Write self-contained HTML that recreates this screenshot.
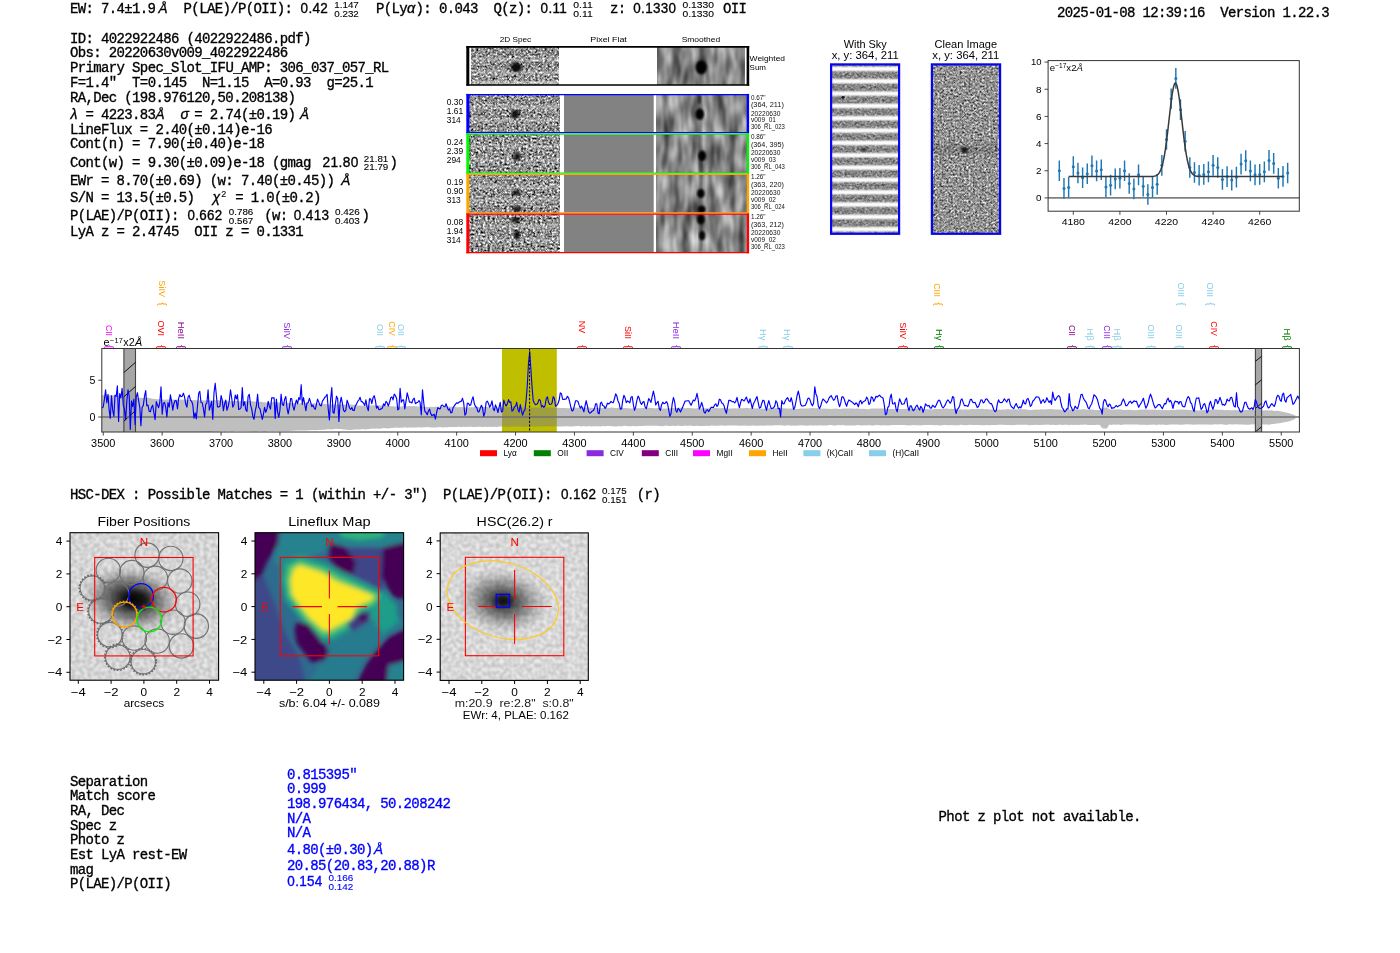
<!DOCTYPE html>
<html><head><meta charset="utf-8"><title>ELiXer report</title>
<style>
html,body{margin:0;padding:0;background:#fff;}
body{width:1400px;height:953px;overflow:hidden;position:relative;}
svg{position:absolute;left:0;top:0;opacity:0.999;}
.m{font-family:"Liberation Mono",monospace;font-size:14px;letter-spacing:-0.58px;fill:#000;white-space:pre;stroke:#000;stroke-width:0.34px;}
.m.b{stroke:#0000ff;}
.mi{font-family:"Liberation Sans",sans-serif;font-style:italic;font-size:13.5px;letter-spacing:0;}
.ms{font-family:"Liberation Sans",sans-serif;font-size:14.4px;letter-spacing:0.35px;}
.fr{font-family:"Liberation Sans",sans-serif;font-size:9.2px;letter-spacing:0;stroke-width:0.12px;}
.s{font-family:"Liberation Sans",sans-serif;}
.b{fill:#0000ff;}
</style></head><body>
<svg width="1400" height="953" viewBox="0 0 1400 953">
<text class="m" x="69.90" y="13.40" textLength="85.53" lengthAdjust="spacing">EW: 7.4±1.9</text>
<text class="m mi" x="158.60" y="13.40">Å</text>
<text class="m" x="183.60" y="13.40" textLength="108.85" lengthAdjust="spacing">P(LAE)/P(OII):</text>
<text class="m ms" x="300.60" y="13.40" textLength="27.60" lengthAdjust="spacingAndGlyphs">0.42</text>
<text class="m fr" x="334.30" y="7.90" textLength="24.50" lengthAdjust="spacingAndGlyphs">1.147</text>
<text class="m fr" x="334.30" y="16.70" textLength="24.50" lengthAdjust="spacingAndGlyphs">0.232</text>
<text class="m" x="376.10" y="13.40" textLength="31.10" lengthAdjust="spacing">P(Ly</text>
<text class="m mi" x="407.00" y="13.40" style="font-size:14.5px">α</text>
<text class="m" x="415.60" y="13.40" textLength="62.20" lengthAdjust="spacing">): 0.043</text>
<text class="m" x="493.40" y="13.40" textLength="38.88" lengthAdjust="spacing">Q(z):</text>
<text class="m ms" x="540.60" y="13.40" textLength="26.60" lengthAdjust="spacingAndGlyphs">0.11</text>
<text class="m fr" x="573.30" y="7.90" textLength="19.50" lengthAdjust="spacingAndGlyphs">0.11</text>
<text class="m fr" x="573.30" y="16.70" textLength="19.50" lengthAdjust="spacingAndGlyphs">0.11</text>
<text class="m" x="610.10" y="13.40" textLength="15.55" lengthAdjust="spacing">z:</text>
<text class="m ms" x="633.30" y="13.40" textLength="43.00" lengthAdjust="spacingAndGlyphs">0.1330</text>
<text class="m fr" x="682.50" y="7.90" textLength="31.50" lengthAdjust="spacingAndGlyphs">0.1330</text>
<text class="m fr" x="682.50" y="16.70" textLength="31.50" lengthAdjust="spacingAndGlyphs">0.1330</text>
<text class="m" x="723.00" y="13.40" textLength="23.33" lengthAdjust="spacing">OII</text>
<text class="m" x="1057.00" y="17.20" textLength="272.12" lengthAdjust="spacing">2025-01-08 12:39:16  Version 1.22.3</text>
<text class="m" x="69.90" y="42.60" textLength="241.03" lengthAdjust="spacing">ID: 4022922486 (4022922486.pdf)</text>
<text class="m" x="69.90" y="57.20" textLength="217.70" lengthAdjust="spacing">Obs: 20220630v009_4022922486</text>
<text class="m" x="69.90" y="71.90" textLength="318.78" lengthAdjust="spacing">Primary Spec_Slot_IFU_AMP: 306_037_057_RL</text>
<text class="m" x="69.90" y="86.70" textLength="303.23" lengthAdjust="spacing">F=1.4"  T=0.145  N=1.15  A=0.93  g=25.1</text>
<text class="m" x="69.90" y="101.50" textLength="225.48" lengthAdjust="spacing">RA,Dec (198.976120,50.208138)</text>
<text class="m mi" x="70.40" y="118.60" style="font-size:14px">λ</text>
<text class="m" x="85.45" y="118.60" textLength="69.98" lengthAdjust="spacing">= 4223.83</text>
<text class="m mi" x="155.40" y="118.60">Å</text>
<text class="m mi" x="180.60" y="118.60" style="font-size:14px">σ</text>
<text class="m" x="194.30" y="118.60" textLength="101.08" lengthAdjust="spacing">= 2.74(±0.19)</text>
<text class="m mi" x="300.00" y="118.60">Å</text>
<text class="m" x="69.90" y="133.80" textLength="202.15" lengthAdjust="spacing">LineFlux = 2.40(±0.14)e-16</text>
<text class="m" x="69.90" y="148.40" textLength="194.38" lengthAdjust="spacing">Cont(n) = 7.90(±0.40)e-18</text>
<text class="m" x="69.90" y="167.00" textLength="241.03" lengthAdjust="spacing">Cont(w) = 9.30(±0.09)e-18 (gmag</text>
<text class="m ms" x="322.60" y="167.00" textLength="36.00" lengthAdjust="spacingAndGlyphs">21.80</text>
<text class="m fr" x="363.80" y="161.50" textLength="24.50" lengthAdjust="spacingAndGlyphs">21.81</text>
<text class="m fr" x="363.80" y="170.30" textLength="24.50" lengthAdjust="spacingAndGlyphs">21.79</text>
<text class="m" x="389.60" y="167.00" textLength="7.78" lengthAdjust="spacing">)</text>
<text class="m" x="69.90" y="184.50" textLength="264.35" lengthAdjust="spacing">EWr = 8.70(±0.69) (w: 7.40(±0.45))</text>
<text class="m mi" x="341.20" y="184.50">Å</text>
<text class="m" x="69.90" y="202.00" textLength="124.40" lengthAdjust="spacing">S/N = 13.5(±0.5)</text>
<text class="m mi" x="212.60" y="202.00" style="font-size:14px">χ</text>
<text class="m fr" x="221.2" y="196.5" style="font-size:9px">2</text>
<text class="m" x="235.20" y="202.00" textLength="85.53" lengthAdjust="spacing">= 1.0(±0.2)</text>
<text class="m" x="69.90" y="219.60" textLength="108.85" lengthAdjust="spacing">P(LAE)/P(OII):</text>
<text class="m ms" x="187.60" y="219.60" textLength="35.00" lengthAdjust="spacingAndGlyphs">0.662</text>
<text class="m fr" x="228.80" y="214.70" textLength="24.50" lengthAdjust="spacingAndGlyphs">0.786</text>
<text class="m fr" x="228.80" y="223.50" textLength="24.50" lengthAdjust="spacingAndGlyphs">0.567</text>
<text class="m" x="264.30" y="219.60" textLength="23.33" lengthAdjust="spacing">(w:</text>
<text class="m ms" x="293.80" y="219.60" textLength="35.60" lengthAdjust="spacingAndGlyphs">0.413</text>
<text class="m fr" x="335.00" y="214.70" textLength="24.80" lengthAdjust="spacingAndGlyphs">0.426</text>
<text class="m fr" x="335.00" y="223.50" textLength="24.80" lengthAdjust="spacingAndGlyphs">0.403</text>
<text class="m" x="361.60" y="219.60" textLength="7.78" lengthAdjust="spacing">)</text>
<text class="m" x="69.90" y="236.30" textLength="233.25" lengthAdjust="spacing">LyA z = 2.4745  OII z = 0.1331</text>
<text class="m" x="69.90" y="499.00" textLength="482.05" lengthAdjust="spacing">HSC-DEX : Possible Matches = 1 (within +/- 3")  P(LAE)/P(OII):</text>
<text class="m" x="69.90" y="785.60" textLength="77.75" lengthAdjust="spacing">Separation</text>
<text class="m" x="69.90" y="800.00" textLength="85.53" lengthAdjust="spacing">Match score</text>
<text class="m" x="69.90" y="814.90" textLength="54.43" lengthAdjust="spacing">RA, Dec</text>
<text class="m" x="69.90" y="829.60" textLength="46.65" lengthAdjust="spacing">Spec z</text>
<text class="m" x="69.90" y="844.30" textLength="54.43" lengthAdjust="spacing">Photo z</text>
<text class="m" x="69.90" y="859.00" textLength="116.62" lengthAdjust="spacing">Est LyA rest-EW</text>
<text class="m" x="69.90" y="873.50" textLength="23.33" lengthAdjust="spacing">mag</text>
<text class="m" x="69.90" y="888.40" textLength="101.08" lengthAdjust="spacing">P(LAE)/P(OII)</text>
<text class="m b" x="287.00" y="778.70" textLength="69.98" lengthAdjust="spacing">0.815395"</text>
<text class="m b" x="287.00" y="793.30" textLength="38.88" lengthAdjust="spacing">0.999</text>
<text class="m b" x="287.00" y="808.00" textLength="163.28" lengthAdjust="spacing">198.976434, 50.208242</text>
<text class="m b" x="287.00" y="822.50" textLength="23.33" lengthAdjust="spacing">N/A</text>
<text class="m b" x="287.00" y="837.20" textLength="23.33" lengthAdjust="spacing">N/A</text>
<text class="m b" x="287.00" y="853.60" textLength="85.53" lengthAdjust="spacing">4.80(±0.30)</text>
<text class="m mi b" x="374.02" y="853.60">Å</text>
<text class="m b" x="287.00" y="869.60" textLength="147.72" lengthAdjust="spacing">20.85(20.83,20.88)R</text>
<text class="m ms b" x="287.30" y="886.00" textLength="35.40" lengthAdjust="spacingAndGlyphs">0.154</text>
<text class="m fr b" x="328.60" y="881.10" textLength="24.80" lengthAdjust="spacingAndGlyphs">0.166</text>
<text class="m fr b" x="328.60" y="889.90" textLength="24.80" lengthAdjust="spacingAndGlyphs">0.142</text>
<text class="m" x="938.60" y="821.30" textLength="202.15" lengthAdjust="spacing">Phot z plot not available.</text>
<defs>
<filter id="nz" x="0" y="0" width="100%" height="100%" color-interpolation-filters="sRGB">
<feTurbulence type="fractalNoise" baseFrequency="0.42 0.5" numOctaves="2" seed="7" result="t"/>
<feColorMatrix in="t" type="matrix" values="0.92 0.92 0.92 0 -0.82  0.92 0.92 0.92 0 -0.82  0.92 0.92 0.92 0 -0.82  0 0 0 0 1"/>
</filter>
<filter id="nz2" x="0" y="0" width="100%" height="100%" color-interpolation-filters="sRGB">
<feTurbulence type="fractalNoise" baseFrequency="0.42 0.5" numOctaves="2" seed="23" result="t"/>
<feColorMatrix in="t" type="matrix" values="0.92 0.92 0.92 0 -0.82  0.92 0.92 0.92 0 -0.82  0.92 0.92 0.92 0 -0.82  0 0 0 0 1"/>
</filter>
<filter id="sm" x="0" y="0" width="100%" height="100%" color-interpolation-filters="sRGB">
<feTurbulence type="fractalNoise" baseFrequency="0.11 0.035" numOctaves="2" seed="3" result="t"/>
<feColorMatrix in="t" type="matrix" values="0.85 0 0 0 0.1  0.85 0 0 0 0.1  0.85 0 0 0 0.1  0 0 0 0 1"/>
</filter>
<filter id="pf" x="0" y="0" width="100%" height="100%" color-interpolation-filters="sRGB">
<feTurbulence type="fractalNoise" baseFrequency="0.7" numOctaves="1" seed="5" result="t"/>
<feColorMatrix in="t" type="matrix" values="0.12 0 0 0 0.44  0.12 0 0 0 0.44  0.12 0 0 0 0.44  0 0 0 0 1"/>
</filter>
<filter id="bl1"><feGaussianBlur stdDeviation="1.1"/></filter>
<filter id="bl2"><feGaussianBlur stdDeviation="1.6"/></filter>
<filter id="bl3"><feGaussianBlur stdDeviation="2.5"/></filter>
</defs>
<text class="s" x="515.40" y="42.00" font-size="8.1" text-anchor="middle" fill="#000" textLength="31.50" lengthAdjust="spacingAndGlyphs">2D Spec</text>
<text class="s" x="608.60" y="42.00" font-size="8.1" text-anchor="middle" fill="#000" textLength="36.50" lengthAdjust="spacingAndGlyphs">Pixel Flat</text>
<text class="s" x="700.90" y="42.00" font-size="8.1" text-anchor="middle" fill="#000" textLength="38.50" lengthAdjust="spacingAndGlyphs">Smoothed</text>
<rect x="471.5" y="47.3" width="87.5" height="37.4" filter="url(#nz)"/>
<rect x="657.3" y="47.3" width="87.4" height="37.4" filter="url(#sm)"/>
<rect x="471.5" y="58.0" width="87.5" height="3.6" fill="#fff" opacity="0.28" filter="url(#bl1)"/>
<rect x="471.5" y="71.1" width="87.5" height="3.6" fill="#fff" opacity="0.28" filter="url(#bl1)"/>
<rect x="471.5" y="80.5" width="87.5" height="4.2" fill="#fff" opacity="0.35"/>
<ellipse cx="516.3" cy="67.3" rx="5.6" ry="5.0" fill="#000" opacity="0.9" filter="url(#bl1)"/>
<rect x="699.2" y="47.3" width="3.6" height="37.4" fill="#000" opacity="0.35" filter="url(#bl1)"/>
<ellipse cx="701.2" cy="67.3" rx="5.7" ry="6.9" fill="#000" filter="url(#bl1)"/>
<path d="M467.8 46.1V85.6" stroke="#000" stroke-width="3" fill="none"/>
<path d="M466.3 46.9H749.2M466.3 85.0H749.2" stroke="#000" stroke-width="1.6" fill="none"/>
<path d="M747.9 46.1V85.6" stroke="#000" stroke-width="2.6" fill="none"/>
<text class="s" x="749.60" y="60.90" font-size="8.1" text-anchor="start" fill="#000" textLength="35.40" lengthAdjust="spacingAndGlyphs">Weighted</text>
<text class="s" x="749.60" y="69.70" font-size="8.1" text-anchor="start" fill="#000" textLength="16.40" lengthAdjust="spacingAndGlyphs">Sum</text>
<rect x="469.4" y="94.9" width="90.4" height="38.1" filter="url(#nz)"/>
<rect x="469.4" y="105.1" width="90.4" height="3.6" fill="#fff" opacity="0.28" filter="url(#bl1)"/>
<rect x="469.4" y="118.4" width="90.4" height="3.6" fill="#fff" opacity="0.28" filter="url(#bl1)"/>
<rect x="564" y="94.9" width="89.7" height="38.1" fill="#828282"/>
<rect x="656.4" y="94.9" width="90.4" height="38.1" filter="url(#sm)"/>
<rect x="698.8" y="94.9" width="3.4" height="38.1" fill="#000" opacity="0.3" filter="url(#bl1)"/>
<ellipse cx="515.2" cy="114.2" rx="4.2" ry="4.4" fill="#000" opacity="0.85" filter="url(#bl1)"/>
<ellipse cx="699.7" cy="114.2" rx="4.4" ry="5.6" fill="#000" opacity="1" filter="url(#bl1)"/>
<ellipse cx="699.4" cy="99.5" rx="1.6" ry="4.5" fill="#000" opacity="0.6" filter="url(#bl1)"/>
<rect x="469.4" y="134.6" width="90.4" height="38.2" filter="url(#nz2)"/>
<rect x="469.4" y="144.8" width="90.4" height="3.6" fill="#fff" opacity="0.28" filter="url(#bl1)"/>
<rect x="469.4" y="158.2" width="90.4" height="3.6" fill="#fff" opacity="0.28" filter="url(#bl1)"/>
<rect x="564" y="134.6" width="89.7" height="38.2" fill="#828282"/>
<rect x="656.4" y="134.6" width="90.4" height="38.2" filter="url(#sm)"/>
<rect x="698.8" y="134.6" width="3.4" height="38.2" fill="#000" opacity="0.3" filter="url(#bl1)"/>
<ellipse cx="517.1" cy="156.7" rx="3.8" ry="4.0" fill="#000" opacity="0.8" filter="url(#bl1)"/>
<ellipse cx="702.2" cy="155.7" rx="4.0" ry="5.2" fill="#000" opacity="1" filter="url(#bl1)"/>
<rect x="469.4" y="174.4" width="90.4" height="38.3" filter="url(#nz)"/>
<rect x="469.4" y="184.7" width="90.4" height="3.6" fill="#fff" opacity="0.28" filter="url(#bl1)"/>
<rect x="469.4" y="198.1" width="90.4" height="3.6" fill="#fff" opacity="0.28" filter="url(#bl1)"/>
<rect x="564" y="174.4" width="89.7" height="38.3" fill="#828282"/>
<rect x="656.4" y="174.4" width="90.4" height="38.3" filter="url(#sm)"/>
<rect x="698.8" y="174.4" width="3.4" height="38.3" fill="#000" opacity="0.3" filter="url(#bl1)"/>
<ellipse cx="516.5" cy="192.7" rx="4.2" ry="3.0" fill="#000" opacity="0.75" filter="url(#bl1)"/>
<ellipse cx="517.1" cy="209.0" rx="3.8" ry="3.0" fill="#000" opacity="0.8" filter="url(#bl1)"/>
<ellipse cx="700.9" cy="193.5" rx="3.8" ry="4.6" fill="#000" opacity="1" filter="url(#bl1)"/>
<ellipse cx="701.7" cy="209.3" rx="3.8" ry="3.6" fill="#000" opacity="1" filter="url(#bl1)"/>
<rect x="469.4" y="214.3" width="90.4" height="38.2" filter="url(#nz2)"/>
<rect x="469.4" y="224.5" width="90.4" height="3.6" fill="#fff" opacity="0.28" filter="url(#bl1)"/>
<rect x="469.4" y="237.9" width="90.4" height="3.6" fill="#fff" opacity="0.28" filter="url(#bl1)"/>
<rect x="564" y="214.3" width="89.7" height="38.2" fill="#828282"/>
<rect x="656.4" y="214.3" width="90.4" height="38.2" filter="url(#sm)"/>
<rect x="698.8" y="214.3" width="3.4" height="38.2" fill="#000" opacity="0.3" filter="url(#bl1)"/>
<ellipse cx="515.8" cy="219.8" rx="4.4" ry="3.0" fill="#000" opacity="0.8" filter="url(#bl1)"/>
<ellipse cx="517.1" cy="235.1" rx="3.2" ry="4.6" fill="#000" opacity="0.85" filter="url(#bl1)"/>
<ellipse cx="700.9" cy="219.4" rx="3.8" ry="5.0" fill="#000" opacity="1" filter="url(#bl1)"/>
<ellipse cx="702.2" cy="235.6" rx="3.2" ry="4.8" fill="#000" opacity="0.95" filter="url(#bl1)"/>
<path d="M467.8 93.9V133.3" stroke="#0000ff" stroke-width="3" fill="none"/>
<path d="M747.9 93.9V133.3" stroke="#0000ff" stroke-width="2.4" fill="none"/>
<path d="M466.3 94.5H749.1" stroke="#0000ff" stroke-width="1.25" fill="none"/>
<path d="M466.3 132.7H749.1" stroke="#0000ff" stroke-width="1.25" fill="none"/>
<path d="M467.8 133.4V173.6" stroke="#00f800" stroke-width="3" fill="none"/>
<path d="M747.9 133.4V173.6" stroke="#00f800" stroke-width="2.4" fill="none"/>
<path d="M466.3 134.0H749.1" stroke="#00f800" stroke-width="1.25" fill="none"/>
<path d="M466.3 173.0H749.1" stroke="#00f800" stroke-width="1.25" fill="none"/>
<path d="M467.8 173.7V213.5" stroke="#ffa500" stroke-width="3" fill="none"/>
<path d="M747.9 173.7V213.5" stroke="#ffa500" stroke-width="2.4" fill="none"/>
<path d="M466.3 174.3H749.1" stroke="#ffa500" stroke-width="1.25" fill="none"/>
<path d="M466.3 212.9H749.1" stroke="#ffa500" stroke-width="1.25" fill="none"/>
<path d="M467.8 213.6V253.3" stroke="#ff0000" stroke-width="3" fill="none"/>
<path d="M747.9 213.6V253.3" stroke="#ff0000" stroke-width="2.4" fill="none"/>
<path d="M466.3 214.2H749.1" stroke="#ff0000" stroke-width="1.25" fill="none"/>
<path d="M466.3 252.7H749.1" stroke="#ff0000" stroke-width="1.25" fill="none"/>
<text class="s" x="446.80" y="105.40" font-size="8.2" text-anchor="start" fill="#000" textLength="16.40" lengthAdjust="spacingAndGlyphs">0.30</text>
<text class="s" x="446.80" y="114.25" font-size="8.2" text-anchor="start" fill="#000" textLength="16.40" lengthAdjust="spacingAndGlyphs">1.61</text>
<text class="s" x="446.80" y="123.10" font-size="8.2" text-anchor="start" fill="#000" textLength="14.00" lengthAdjust="spacingAndGlyphs">314</text>
<text class="s" x="750.90" y="99.60" font-size="6.5" text-anchor="start" fill="#111" textLength="14.60" lengthAdjust="spacingAndGlyphs">0.67"</text>
<text class="s" x="750.90" y="107.10" font-size="6.5" text-anchor="start" fill="#111" textLength="33.00" lengthAdjust="spacingAndGlyphs">(364, 211)</text>
<text class="s" x="750.90" y="115.60" font-size="6.5" text-anchor="start" fill="#111" textLength="29.50" lengthAdjust="spacingAndGlyphs">20220630</text>
<text class="s" x="750.90" y="122.10" font-size="6.5" text-anchor="start" fill="#111" textLength="25.00" lengthAdjust="spacingAndGlyphs">v009_01</text>
<text class="s" x="750.90" y="129.20" font-size="6.5" text-anchor="start" fill="#111" textLength="34.00" lengthAdjust="spacingAndGlyphs">306_RL_023</text>
<text class="s" x="446.80" y="145.10" font-size="8.2" text-anchor="start" fill="#000" textLength="16.40" lengthAdjust="spacingAndGlyphs">0.24</text>
<text class="s" x="446.80" y="153.95" font-size="8.2" text-anchor="start" fill="#000" textLength="16.40" lengthAdjust="spacingAndGlyphs">2.39</text>
<text class="s" x="446.80" y="162.80" font-size="8.2" text-anchor="start" fill="#000" textLength="14.00" lengthAdjust="spacingAndGlyphs">294</text>
<text class="s" x="750.90" y="139.30" font-size="6.5" text-anchor="start" fill="#111" textLength="14.60" lengthAdjust="spacingAndGlyphs">0.86"</text>
<text class="s" x="750.90" y="146.80" font-size="6.5" text-anchor="start" fill="#111" textLength="33.00" lengthAdjust="spacingAndGlyphs">(364, 395)</text>
<text class="s" x="750.90" y="155.30" font-size="6.5" text-anchor="start" fill="#111" textLength="29.50" lengthAdjust="spacingAndGlyphs">20220630</text>
<text class="s" x="750.90" y="161.80" font-size="6.5" text-anchor="start" fill="#111" textLength="25.00" lengthAdjust="spacingAndGlyphs">v009_03</text>
<text class="s" x="750.90" y="168.90" font-size="6.5" text-anchor="start" fill="#111" textLength="34.00" lengthAdjust="spacingAndGlyphs">306_RL_043</text>
<text class="s" x="446.80" y="184.90" font-size="8.2" text-anchor="start" fill="#000" textLength="16.40" lengthAdjust="spacingAndGlyphs">0.19</text>
<text class="s" x="446.80" y="193.75" font-size="8.2" text-anchor="start" fill="#000" textLength="16.40" lengthAdjust="spacingAndGlyphs">0.90</text>
<text class="s" x="446.80" y="202.60" font-size="8.2" text-anchor="start" fill="#000" textLength="14.00" lengthAdjust="spacingAndGlyphs">313</text>
<text class="s" x="750.90" y="179.10" font-size="6.5" text-anchor="start" fill="#111" textLength="14.60" lengthAdjust="spacingAndGlyphs">1.26"</text>
<text class="s" x="750.90" y="186.60" font-size="6.5" text-anchor="start" fill="#111" textLength="33.00" lengthAdjust="spacingAndGlyphs">(363, 220)</text>
<text class="s" x="750.90" y="195.10" font-size="6.5" text-anchor="start" fill="#111" textLength="29.50" lengthAdjust="spacingAndGlyphs">20220630</text>
<text class="s" x="750.90" y="201.60" font-size="6.5" text-anchor="start" fill="#111" textLength="25.00" lengthAdjust="spacingAndGlyphs">v009_02</text>
<text class="s" x="750.90" y="208.70" font-size="6.5" text-anchor="start" fill="#111" textLength="34.00" lengthAdjust="spacingAndGlyphs">306_RL_024</text>
<text class="s" x="446.80" y="224.80" font-size="8.2" text-anchor="start" fill="#000" textLength="16.40" lengthAdjust="spacingAndGlyphs">0.08</text>
<text class="s" x="446.80" y="233.65" font-size="8.2" text-anchor="start" fill="#000" textLength="16.40" lengthAdjust="spacingAndGlyphs">1.94</text>
<text class="s" x="446.80" y="242.50" font-size="8.2" text-anchor="start" fill="#000" textLength="14.00" lengthAdjust="spacingAndGlyphs">314</text>
<text class="s" x="750.90" y="219.00" font-size="6.5" text-anchor="start" fill="#111" textLength="14.60" lengthAdjust="spacingAndGlyphs">1.26"</text>
<text class="s" x="750.90" y="226.50" font-size="6.5" text-anchor="start" fill="#111" textLength="33.00" lengthAdjust="spacingAndGlyphs">(363, 212)</text>
<text class="s" x="750.90" y="235.00" font-size="6.5" text-anchor="start" fill="#111" textLength="29.50" lengthAdjust="spacingAndGlyphs">20220630</text>
<text class="s" x="750.90" y="241.50" font-size="6.5" text-anchor="start" fill="#111" textLength="25.00" lengthAdjust="spacingAndGlyphs">v009_02</text>
<text class="s" x="750.90" y="248.60" font-size="6.5" text-anchor="start" fill="#111" textLength="34.00" lengthAdjust="spacingAndGlyphs">306_RL_023</text>
<defs>
<filter id="nzc" x="0" y="0" width="100%" height="100%" color-interpolation-filters="sRGB">
<feTurbulence type="fractalNoise" baseFrequency="0.45 0.5" numOctaves="2" seed="11" result="t"/>
<feColorMatrix in="t" type="matrix" values="0.66 0.66 0.66 0 -0.42  0.66 0.66 0.66 0 -0.42  0.66 0.66 0.66 0 -0.42  0 0 0 0 1"/>
</filter>
<filter id="nzs" x="0" y="0" width="100%" height="100%" color-interpolation-filters="sRGB">
<feTurbulence type="fractalNoise" baseFrequency="0.4 0.45" numOctaves="2" seed="31" result="t"/>
<feColorMatrix in="t" type="matrix" values="0.42 0.42 0.42 0 -0.13  0.42 0.42 0.42 0 -0.13  0.42 0.42 0.42 0 -0.13  0 0 0 0 1"/>
</filter>
<linearGradient id="stripe" x1="0" y1="0" x2="0" y2="1">
<stop offset="0" stop-color="#fff" stop-opacity="1"/><stop offset="0.09" stop-color="#fff" stop-opacity="0.95"/><stop offset="0.27" stop-color="#fff" stop-opacity="0.1"/><stop offset="0.5" stop-color="#fff" stop-opacity="0"/><stop offset="0.73" stop-color="#fff" stop-opacity="0.1"/><stop offset="0.91" stop-color="#fff" stop-opacity="0.95"/><stop offset="1" stop-color="#fff" stop-opacity="1"/>
</linearGradient>
<pattern id="stripes" x="832" y="68.9" width="66" height="12.33" patternUnits="userSpaceOnUse">
<rect x="0" y="0" width="66" height="12.33" fill="url(#stripe)"/>
</pattern>
</defs>
<text class="s" x="865.20" y="47.60" font-size="11.2" text-anchor="middle" fill="#000" textLength="43.00" lengthAdjust="spacingAndGlyphs">With Sky</text>
<text class="s" x="865.20" y="58.60" font-size="11.2" text-anchor="middle" fill="#000" textLength="67.00" lengthAdjust="spacingAndGlyphs">x, y: 364, 211</text>
<text class="s" x="965.80" y="47.60" font-size="11.2" text-anchor="middle" fill="#000" textLength="62.50" lengthAdjust="spacingAndGlyphs">Clean Image</text>
<text class="s" x="965.80" y="58.60" font-size="11.2" text-anchor="middle" fill="#000" textLength="67.00" lengthAdjust="spacingAndGlyphs">x, y: 364, 211</text>
<rect x="831.5" y="64.5" width="67.5" height="169" fill="#fff"/>
<rect x="832" y="65" width="66.5" height="168.5" filter="url(#nzs)"/>
<rect x="832" y="65" width="66.5" height="168.5" fill="url(#stripes)"/>
<ellipse cx="843" cy="97.3" rx="1.6" ry="1.4" fill="#000" opacity=".85"/>
<ellipse cx="864" cy="149.5" rx="3" ry="1.8" fill="#000" opacity=".6" filter="url(#bl1)"/>
<rect x="831.1" y="64.4" width="68" height="169.4" fill="none" stroke="#0505ee" stroke-width="2.2"/>
<rect x="932" y="65" width="68" height="168.5" filter="url(#nzc)"/>
<ellipse cx="964.5" cy="150" rx="3.4" ry="3" fill="#000" opacity=".85" filter="url(#bl1)"/>
<rect x="932" y="145" width="68" height="9" fill="#000" opacity=".12" filter="url(#bl1)"/>
<rect x="931.9" y="64.4" width="68.2" height="169.4" fill="none" stroke="#0505ee" stroke-width="2.2"/>
<path d="M1048.1 197.90H1299.3" stroke="#808080" stroke-width="1.7" fill="none"/>
<path d="M1059.32 160.42V181.06M1063.98 178.07V198.71M1068.64 177.12V197.76M1073.30 156.35V176.99M1077.96 162.73V183.37M1082.62 167.48V188.12M1087.28 163.41V184.05M1091.94 155.39V176.04M1096.60 160.56V181.20M1101.26 159.47V180.11M1105.92 176.72V197.36M1110.58 174.81V195.46M1115.24 168.57V189.21M1119.90 167.89V188.53M1124.56 160.42V181.06M1129.22 173.18V193.83M1133.88 178.62V199.26M1138.54 164.49V185.13M1143.20 175.90V196.54M1147.86 184.18V204.83M1152.52 177.12V197.76M1157.18 174.00V194.64M1161.84 154.99V175.63M1166.50 129.19V149.83M1171.16 88.45V109.09M1175.82 68.08V88.72M1180.48 99.31V119.95M1185.14 130.95V151.59M1189.80 157.16V177.80M1194.46 162.18V182.83M1199.12 164.90V185.54M1203.78 164.09V184.73M1208.44 161.51V182.15M1213.10 154.99V175.63M1217.76 157.16V177.80M1222.42 169.11V189.75M1227.08 166.26V186.90M1231.74 169.79V190.43M1236.40 166.80V187.44M1241.06 153.77V174.41M1245.72 150.37V171.01M1250.38 160.56V181.20M1255.04 164.49V185.13M1259.70 164.09V184.73M1264.36 161.51V182.15M1269.02 150.10V170.74M1273.68 153.09V173.73M1278.34 167.89V188.53M1283.00 166.12V186.76M1287.66 162.73V183.37" stroke="#1f77b4" stroke-width="1.45" fill="none"/>
<g fill="#1f77b4"><circle cx="1059.32" cy="170.74" r="1.5"/><circle cx="1063.98" cy="188.39" r="1.5"/><circle cx="1068.64" cy="187.44" r="1.5"/><circle cx="1073.30" cy="166.67" r="1.5"/><circle cx="1077.96" cy="173.05" r="1.5"/><circle cx="1082.62" cy="177.80" r="1.5"/><circle cx="1087.28" cy="173.73" r="1.5"/><circle cx="1091.94" cy="165.72" r="1.5"/><circle cx="1096.60" cy="170.88" r="1.5"/><circle cx="1101.26" cy="169.79" r="1.5"/><circle cx="1105.92" cy="187.04" r="1.5"/><circle cx="1110.58" cy="185.13" r="1.5"/><circle cx="1115.24" cy="178.89" r="1.5"/><circle cx="1119.90" cy="178.21" r="1.5"/><circle cx="1124.56" cy="170.74" r="1.5"/><circle cx="1129.22" cy="183.51" r="1.5"/><circle cx="1133.88" cy="188.94" r="1.5"/><circle cx="1138.54" cy="174.81" r="1.5"/><circle cx="1143.20" cy="186.22" r="1.5"/><circle cx="1147.86" cy="194.50" r="1.5"/><circle cx="1152.52" cy="187.44" r="1.5"/><circle cx="1157.18" cy="184.32" r="1.5"/><circle cx="1161.84" cy="165.31" r="1.5"/><circle cx="1166.50" cy="139.51" r="1.5"/><circle cx="1171.16" cy="98.77" r="1.5"/><circle cx="1175.82" cy="78.40" r="1.5"/><circle cx="1180.48" cy="109.63" r="1.5"/><circle cx="1185.14" cy="141.27" r="1.5"/><circle cx="1189.80" cy="167.48" r="1.5"/><circle cx="1194.46" cy="172.51" r="1.5"/><circle cx="1199.12" cy="175.22" r="1.5"/><circle cx="1203.78" cy="174.41" r="1.5"/><circle cx="1208.44" cy="171.83" r="1.5"/><circle cx="1213.10" cy="165.31" r="1.5"/><circle cx="1217.76" cy="167.48" r="1.5"/><circle cx="1222.42" cy="179.43" r="1.5"/><circle cx="1227.08" cy="176.58" r="1.5"/><circle cx="1231.74" cy="180.11" r="1.5"/><circle cx="1236.40" cy="177.12" r="1.5"/><circle cx="1241.06" cy="164.09" r="1.5"/><circle cx="1245.72" cy="160.69" r="1.5"/><circle cx="1250.38" cy="170.88" r="1.5"/><circle cx="1255.04" cy="174.81" r="1.5"/><circle cx="1259.70" cy="174.41" r="1.5"/><circle cx="1264.36" cy="171.83" r="1.5"/><circle cx="1269.02" cy="160.42" r="1.5"/><circle cx="1273.68" cy="163.41" r="1.5"/><circle cx="1278.34" cy="178.21" r="1.5"/><circle cx="1283.00" cy="176.44" r="1.5"/><circle cx="1287.66" cy="173.05" r="1.5"/></g>
<path d="M1068.64 176.58L1068.64 176.58L1069.81 176.58L1070.97 176.58L1072.13 176.58L1073.30 176.58L1074.46 176.58L1075.63 176.58L1076.79 176.58L1077.96 176.58L1079.12 176.58L1080.29 176.58L1081.45 176.58L1082.62 176.58L1083.78 176.58L1084.95 176.58L1086.12 176.58L1087.28 176.58L1088.44 176.58L1089.61 176.58L1090.77 176.58L1091.94 176.58L1093.11 176.58L1094.27 176.58L1095.43 176.58L1096.60 176.58L1097.76 176.58L1098.93 176.58L1100.10 176.58L1101.26 176.58L1102.42 176.58L1103.59 176.58L1104.75 176.58L1105.92 176.58L1107.09 176.58L1108.25 176.58L1109.41 176.58L1110.58 176.58L1111.74 176.58L1112.91 176.58L1114.08 176.58L1115.24 176.58L1116.40 176.58L1117.57 176.58L1118.73 176.58L1119.90 176.58L1121.07 176.58L1122.23 176.58L1123.39 176.58L1124.56 176.58L1125.72 176.58L1126.89 176.58L1128.06 176.58L1129.22 176.58L1130.38 176.58L1131.55 176.58L1132.71 176.58L1133.88 176.58L1135.05 176.58L1136.21 176.58L1137.38 176.58L1138.54 176.58L1139.70 176.58L1140.87 176.58L1142.03 176.58L1143.20 176.58L1144.37 176.58L1145.53 176.58L1146.69 176.58L1147.86 176.57L1149.02 176.56L1150.19 176.54L1151.36 176.50L1152.52 176.43L1153.68 176.29L1154.85 176.06L1156.01 175.66L1157.18 175.00L1158.35 173.96L1159.51 172.39L1160.67 170.08L1161.84 166.84L1163.00 162.45L1164.17 156.76L1165.34 149.70L1166.50 141.30L1167.66 131.81L1168.83 121.61L1169.99 111.31L1171.16 101.61L1172.33 93.29L1173.49 87.08L1174.65 83.55L1175.82 83.06L1176.98 85.64L1178.15 91.04L1179.32 98.76L1180.48 108.10L1181.64 118.29L1182.81 128.60L1183.97 138.37L1185.14 147.15L1186.31 154.65L1187.47 160.78L1188.63 165.57L1189.80 169.16L1190.96 171.74L1192.13 173.53L1193.30 174.72L1194.46 175.48L1195.62 175.95L1196.79 176.23L1197.95 176.39L1199.12 176.48L1200.28 176.53L1201.45 176.56L1202.62 176.57L1203.78 176.57L1204.94 176.58L1206.11 176.58L1207.27 176.58L1208.44 176.58L1209.61 176.58L1210.77 176.58L1211.93 176.58L1213.10 176.58L1214.26 176.58L1215.43 176.58L1216.60 176.58L1217.76 176.58L1218.92 176.58L1220.09 176.58L1221.25 176.58L1222.42 176.58L1223.59 176.58L1224.75 176.58L1225.91 176.58L1227.08 176.58L1228.24 176.58L1229.41 176.58L1230.58 176.58L1231.74 176.58L1232.90 176.58L1234.07 176.58L1235.23 176.58L1236.40 176.58L1237.57 176.58L1238.73 176.58L1239.89 176.58L1241.06 176.58L1242.22 176.58L1243.39 176.58L1244.55 176.58L1245.72 176.58L1246.88 176.58L1248.05 176.58L1249.21 176.58L1250.38 176.58L1251.55 176.58L1252.71 176.58L1253.88 176.58L1255.04 176.58L1256.20 176.58L1257.37 176.58L1258.53 176.58L1259.70 176.58L1260.87 176.58L1262.03 176.58L1263.19 176.58L1264.36 176.58L1265.52 176.58L1266.69 176.58L1267.86 176.58L1269.02 176.58L1270.18 176.58L1271.35 176.58L1272.51 176.58L1273.68 176.58L1274.85 176.58L1276.01 176.58L1277.17 176.58L1278.34 176.58L1279.50 176.58L1280.67 176.58L1281.84 176.58L1283.00 176.58" stroke="#3a3a3a" stroke-width="1.5" fill="none" stroke-linejoin="round"/>
<rect x="1048.1" y="60.6" width="251.20" height="150.60" fill="none" stroke="#333" stroke-width="1"/>
<path d="M1073.30 211.2v3.6M1119.90 211.2v3.6M1166.50 211.2v3.6M1213.10 211.2v3.6M1259.70 211.2v3.6M1048.1 197.90h-3.6M1048.1 170.74h-3.6M1048.1 143.58h-3.6M1048.1 116.42h-3.6M1048.1 89.26h-3.6M1048.1 62.10h-3.6" stroke="#333" stroke-width="0.9" fill="none"/>
<text class="s" x="1073.30" y="224.60" font-size="9.9" text-anchor="middle" fill="#000" textLength="23.30" lengthAdjust="spacingAndGlyphs">4180</text>
<text class="s" x="1119.90" y="224.60" font-size="9.9" text-anchor="middle" fill="#000" textLength="23.30" lengthAdjust="spacingAndGlyphs">4200</text>
<text class="s" x="1166.50" y="224.60" font-size="9.9" text-anchor="middle" fill="#000" textLength="23.30" lengthAdjust="spacingAndGlyphs">4220</text>
<text class="s" x="1213.10" y="224.60" font-size="9.9" text-anchor="middle" fill="#000" textLength="23.30" lengthAdjust="spacingAndGlyphs">4240</text>
<text class="s" x="1259.70" y="224.60" font-size="9.9" text-anchor="middle" fill="#000" textLength="23.30" lengthAdjust="spacingAndGlyphs">4260</text>
<text class="s" x="1041.50" y="201.20" font-size="9.8" text-anchor="end" fill="#000" textLength="5.50" lengthAdjust="spacingAndGlyphs">0</text>
<text class="s" x="1041.50" y="174.04" font-size="9.8" text-anchor="end" fill="#000" textLength="5.50" lengthAdjust="spacingAndGlyphs">2</text>
<text class="s" x="1041.50" y="146.88" font-size="9.8" text-anchor="end" fill="#000" textLength="5.50" lengthAdjust="spacingAndGlyphs">4</text>
<text class="s" x="1041.50" y="119.72" font-size="9.8" text-anchor="end" fill="#000" textLength="5.50" lengthAdjust="spacingAndGlyphs">6</text>
<text class="s" x="1041.50" y="92.56" font-size="9.8" text-anchor="end" fill="#000" textLength="5.50" lengthAdjust="spacingAndGlyphs">8</text>
<text class="s" x="1041.50" y="65.40" font-size="9.8" text-anchor="end" fill="#000" textLength="10.60" lengthAdjust="spacingAndGlyphs">10</text>
<text class="s" x="1049.8" y="71.2" font-size="9.6" fill="#000">e<tspan dy="-3.4" font-size="6.6">−17</tspan><tspan dy="3.4">x2</tspan><tspan font-style="italic">Å</tspan></text>
<defs><clipPath id="spc"><rect x="101.8" y="348.5" width="1197.6" height="83.5"/></clipPath>
<pattern id="hat" width="12" height="12" patternUnits="userSpaceOnUse" x="123" y="352"><path d="M-2 14L14 -2M-8 8L8 -8M4 20L20 4" stroke="#000" stroke-width="0.9"/></pattern></defs>
<text class="s" transform="translate(106.1,336.0) rotate(90)" text-anchor="end" font-size="9.8" fill="#ff00ff" textLength="11.1" lengthAdjust="spacingAndGlyphs">CII</text>
<text class="s" transform="translate(106.2,348.5) rotate(90)" text-anchor="end" font-size="10.6" fill="#ff00ff">{</text>
<text class="s" transform="translate(158.1,336.0) rotate(90)" text-anchor="end" font-size="9.8" fill="#ff0000" textLength="15.5" lengthAdjust="spacingAndGlyphs">OVI</text>
<text class="s" transform="translate(158.2,348.5) rotate(90)" text-anchor="end" font-size="10.6" fill="#ff0000">{</text>
<text class="s" transform="translate(178.1,339.0) rotate(90)" text-anchor="end" font-size="9.8" fill="#8b008b" textLength="17.3" lengthAdjust="spacingAndGlyphs">HeII</text>
<text class="s" transform="translate(178.2,348.5) rotate(90)" text-anchor="end" font-size="10.6" fill="#8b008b">{</text>
<text class="s" transform="translate(283.8,339.0) rotate(90)" text-anchor="end" font-size="9.8" fill="#8a2be2" textLength="16.7" lengthAdjust="spacingAndGlyphs">SiIV</text>
<text class="s" transform="translate(283.9,348.5) rotate(90)" text-anchor="end" font-size="10.6" fill="#8a2be2">{</text>
<text class="s" transform="translate(376.9,336.0) rotate(90)" text-anchor="end" font-size="9.8" fill="#87ceeb" textLength="11.9" lengthAdjust="spacingAndGlyphs">OII</text>
<text class="s" transform="translate(377.0,348.5) rotate(90)" text-anchor="end" font-size="10.6" fill="#87ceeb">{</text>
<text class="s" transform="translate(389.1,336.0) rotate(90)" text-anchor="end" font-size="9.8" fill="#ffa500" textLength="14.7" lengthAdjust="spacingAndGlyphs">CIV</text>
<text class="s" transform="translate(389.2,348.5) rotate(90)" text-anchor="end" font-size="10.6" fill="#ffa500">{</text>
<text class="s" transform="translate(398.1,336.0) rotate(90)" text-anchor="end" font-size="9.8" fill="#87ceeb" textLength="11.9" lengthAdjust="spacingAndGlyphs">OII</text>
<text class="s" transform="translate(398.2,348.5) rotate(90)" text-anchor="end" font-size="10.6" fill="#87ceeb">{</text>
<text class="s" transform="translate(578.7,333.1) rotate(90)" text-anchor="end" font-size="9.8" fill="#ff0000" textLength="12.4" lengthAdjust="spacingAndGlyphs">NV</text>
<text class="s" transform="translate(578.8,348.5) rotate(90)" text-anchor="end" font-size="10.6" fill="#ff0000">{</text>
<text class="s" transform="translate(625.0,339.0) rotate(90)" text-anchor="end" font-size="9.8" fill="#ff0000" textLength="13.1" lengthAdjust="spacingAndGlyphs">SiII</text>
<text class="s" transform="translate(625.1,348.5) rotate(90)" text-anchor="end" font-size="10.6" fill="#ff0000">{</text>
<text class="s" transform="translate(673.3,339.0) rotate(90)" text-anchor="end" font-size="9.8" fill="#8a2be2" textLength="17.3" lengthAdjust="spacingAndGlyphs">HeII</text>
<text class="s" transform="translate(673.4,348.5) rotate(90)" text-anchor="end" font-size="10.6" fill="#8a2be2">{</text>
<text class="s" transform="translate(760.2,340.6) rotate(90)" text-anchor="end" font-size="9.8" fill="#87ceeb" textLength="11.6" lengthAdjust="spacingAndGlyphs">Hγ</text>
<text class="s" transform="translate(760.3,348.5) rotate(90)" text-anchor="end" font-size="10.6" fill="#87ceeb">{</text>
<text class="s" transform="translate(784.4,340.6) rotate(90)" text-anchor="end" font-size="9.8" fill="#87ceeb" textLength="11.6" lengthAdjust="spacingAndGlyphs">Hγ</text>
<text class="s" transform="translate(784.5,348.5) rotate(90)" text-anchor="end" font-size="10.6" fill="#87ceeb">{</text>
<text class="s" transform="translate(900.2,339.0) rotate(90)" text-anchor="end" font-size="9.8" fill="#ff0000" textLength="16.7" lengthAdjust="spacingAndGlyphs">SiIV</text>
<text class="s" transform="translate(900.3,348.5) rotate(90)" text-anchor="end" font-size="10.6" fill="#ff0000">{</text>
<text class="s" transform="translate(935.9,340.6) rotate(90)" text-anchor="end" font-size="9.8" fill="#008000" textLength="11.6" lengthAdjust="spacingAndGlyphs">Hγ</text>
<text class="s" transform="translate(936.0,348.5) rotate(90)" text-anchor="end" font-size="10.6" fill="#008000">{</text>
<text class="s" transform="translate(1068.6,336.0) rotate(90)" text-anchor="end" font-size="9.8" fill="#8b008b" textLength="11.1" lengthAdjust="spacingAndGlyphs">CII</text>
<text class="s" transform="translate(1068.7,348.5) rotate(90)" text-anchor="end" font-size="10.6" fill="#8b008b">{</text>
<text class="s" transform="translate(1086.6,340.6) rotate(90)" text-anchor="end" font-size="9.8" fill="#87ceeb" textLength="12.0" lengthAdjust="spacingAndGlyphs">Hβ</text>
<text class="s" transform="translate(1086.7,348.5) rotate(90)" text-anchor="end" font-size="10.6" fill="#87ceeb">{</text>
<text class="s" transform="translate(1103.9,339.0) rotate(90)" text-anchor="end" font-size="9.8" fill="#8a2be2" textLength="13.8" lengthAdjust="spacingAndGlyphs">CIII</text>
<text class="s" transform="translate(1104.0,348.5) rotate(90)" text-anchor="end" font-size="10.6" fill="#8a2be2">{</text>
<text class="s" transform="translate(1113.8,340.6) rotate(90)" text-anchor="end" font-size="9.8" fill="#87ceeb" textLength="12.0" lengthAdjust="spacingAndGlyphs">Hβ</text>
<text class="s" transform="translate(1113.9,348.5) rotate(90)" text-anchor="end" font-size="10.6" fill="#87ceeb">{</text>
<text class="s" transform="translate(1148.2,339.0) rotate(90)" text-anchor="end" font-size="9.8" fill="#87ceeb" textLength="14.6" lengthAdjust="spacingAndGlyphs">OIII</text>
<text class="s" transform="translate(1148.3,348.5) rotate(90)" text-anchor="end" font-size="10.6" fill="#87ceeb">{</text>
<text class="s" transform="translate(1175.6,339.0) rotate(90)" text-anchor="end" font-size="9.8" fill="#87ceeb" textLength="14.6" lengthAdjust="spacingAndGlyphs">OIII</text>
<text class="s" transform="translate(1175.7,348.5) rotate(90)" text-anchor="end" font-size="10.6" fill="#87ceeb">{</text>
<text class="s" transform="translate(1210.5,336.0) rotate(90)" text-anchor="end" font-size="9.8" fill="#ff0000" textLength="14.7" lengthAdjust="spacingAndGlyphs">CIV</text>
<text class="s" transform="translate(1210.6,348.5) rotate(90)" text-anchor="end" font-size="10.6" fill="#ff0000">{</text>
<text class="s" transform="translate(1283.9,340.6) rotate(90)" text-anchor="end" font-size="9.8" fill="#008000" textLength="12.0" lengthAdjust="spacingAndGlyphs">Hβ</text>
<text class="s" transform="translate(1284.0,348.5) rotate(90)" text-anchor="end" font-size="10.6" fill="#008000">{</text>
<text class="s" transform="translate(159.3,297.0) rotate(90)" text-anchor="end" font-size="9.8" fill="#ffa500" textLength="16.7" lengthAdjust="spacingAndGlyphs">SiIV</text>
<text class="s" transform="translate(159.4,305.7) rotate(90)" text-anchor="end" font-size="10.6" fill="#ffa500">{</text>
<text class="s" transform="translate(934.4,297.0) rotate(90)" text-anchor="end" font-size="9.8" fill="#ffa500" textLength="13.8" lengthAdjust="spacingAndGlyphs">CIII</text>
<text class="s" transform="translate(934.5,305.7) rotate(90)" text-anchor="end" font-size="10.6" fill="#ffa500">{</text>
<text class="s" transform="translate(1178.2,297.0) rotate(90)" text-anchor="end" font-size="9.8" fill="#87ceeb" textLength="14.6" lengthAdjust="spacingAndGlyphs">OIII</text>
<text class="s" transform="translate(1178.3,305.7) rotate(90)" text-anchor="end" font-size="10.6" fill="#87ceeb">{</text>
<text class="s" transform="translate(1206.6,297.0) rotate(90)" text-anchor="end" font-size="9.8" fill="#87ceeb" textLength="14.6" lengthAdjust="spacingAndGlyphs">OIII</text>
<text class="s" transform="translate(1206.7,305.7) rotate(90)" text-anchor="end" font-size="10.6" fill="#87ceeb">{</text>
<g clip-path="url(#spc)">
<rect x="502" y="348.5" width="54.8" height="83.5" fill="#bfbf00"/>
<path d="M100.9 395.0 L103.2 395.0 L105.6 395.1 L108.0 395.5 L110.3 395.1 L112.7 395.2 L115.0 395.6 L117.4 395.8 L119.7 396.3 L122.1 396.5 L124.5 396.5 L126.8 396.8 L129.2 397.1 L131.5 397.7 L133.9 397.7 L136.2 397.4 L138.6 397.9 L140.9 397.7 L143.3 398.0 L145.7 397.8 L148.0 397.8 L150.4 398.3 L152.7 398.7 L155.1 398.9 L157.4 399.3 L159.8 399.4 L162.2 399.4 L164.5 399.8 L166.9 399.6 L169.2 399.4 L171.6 399.5 L173.9 399.8 L176.3 399.6 L178.6 399.7 L181.0 399.6 L183.4 399.7 L185.7 399.4 L188.1 399.9 L190.4 399.9 L192.8 400.3 L195.1 400.1 L197.5 400.6 L199.8 400.6 L202.2 400.3 L204.6 400.4 L206.9 400.2 L209.3 400.3 L211.6 400.4 L214.0 400.0 L216.3 400.4 L218.7 400.0 L221.1 400.5 L223.4 400.6 L225.8 400.8 L228.1 401.3 L230.5 401.4 L232.8 401.0 L235.2 401.1 L237.5 401.1 L239.9 401.4 L242.3 401.3 L244.6 401.2 L247.0 400.8 L249.3 400.9 L251.7 401.3 L254.0 401.5 L256.4 401.8 L258.7 402.0 L261.1 401.8 L263.5 402.2 L265.8 402.6 L268.2 402.2 L270.5 402.4 L272.9 402.1 L275.2 402.2 L277.6 402.3 L279.9 402.4 L282.3 402.1 L284.7 402.6 L287.0 402.5 L289.4 403.1 L291.7 403.2 L294.1 403.2 L296.4 403.3 L298.8 403.5 L301.2 403.3 L303.5 403.6 L305.9 403.2 L308.2 403.1 L310.6 403.3 L312.9 403.6 L315.3 403.2 L317.6 403.4 L320.0 403.6 L322.4 403.7 L324.7 404.0 L327.1 404.2 L329.4 404.4 L331.8 404.8 L334.1 404.6 L336.5 404.8 L338.9 404.5 L341.2 404.5 L343.6 404.7 L345.9 404.6 L348.3 404.7 L350.6 404.6 L353.0 404.7 L355.3 405.1 L357.7 405.4 L360.1 405.4 L362.4 405.7 L364.8 405.6 L367.1 405.6 L369.5 405.6 L371.8 405.5 L374.2 405.3 L376.5 405.3 L378.9 405.5 L381.3 405.4 L383.6 405.3 L386.0 405.7 L388.3 405.7 L390.7 406.3 L393.0 406.2 L395.4 406.4 L397.8 406.6 L400.1 406.7 L402.5 406.3 L404.8 406.2 L407.2 406.3 L409.5 406.0 L411.9 406.2 L414.2 405.9 L416.6 406.4 L419.0 406.5 L421.3 406.5 L423.7 406.5 L426.0 407.1 L428.4 407.0 L430.7 406.8 L433.1 407.1 L435.4 406.7 L437.8 406.8 L440.2 406.7 L442.5 406.5 L444.9 406.5 L447.2 406.6 L449.6 406.8 L451.9 406.7 L454.3 406.7 L456.6 407.3 L459.0 407.2 L461.4 407.0 L463.7 407.6 L466.1 407.4 L468.4 407.2 L470.8 407.3 L473.1 407.2 L475.5 406.8 L477.9 407.1 L480.2 407.2 L482.6 406.8 L484.9 407.1 L487.3 406.9 L489.6 407.3 L492.0 407.4 L494.3 407.8 L496.7 407.5 L499.1 407.8 L501.4 407.5 L503.8 407.8 L506.1 407.2 L508.5 407.2 L510.8 407.1 L513.2 407.1 L515.5 407.1 L517.9 407.4 L520.3 407.6 L522.6 407.6 L525.0 407.6 L527.3 408.0 L529.7 408.1 L532.0 407.8 L534.4 407.6 L536.8 407.8 L539.1 407.6 L541.5 407.3 L543.8 407.7 L546.2 407.6 L548.5 407.4 L550.9 407.4 L553.2 407.7 L555.6 407.8 L558.0 407.8 L560.3 408.1 L562.7 407.9 L565.0 407.9 L567.4 408.2 L569.7 408.2 L572.1 407.8 L574.5 407.5 L576.8 407.7 L579.2 407.8 L581.5 407.8 L583.9 407.3 L586.2 407.8 L588.6 407.5 L590.9 407.7 L593.3 408.0 L595.7 408.3 L598.0 408.1 L600.4 408.2 L602.7 407.9 L605.1 407.8 L607.4 407.7 L609.8 407.7 L612.1 407.5 L614.5 407.9 L616.9 407.9 L619.2 407.5 L621.6 407.7 L623.9 408.1 L626.3 408.1 L628.6 408.3 L631.0 408.5 L633.4 408.4 L635.7 408.0 L638.1 408.3 L640.4 408.2 L642.8 408.0 L645.1 408.1 L647.5 407.8 L649.8 407.7 L652.2 407.9 L654.6 408.2 L656.9 408.2 L659.3 408.1 L661.6 408.5 L664.0 408.5 L666.3 408.4 L668.7 408.4 L671.0 408.2 L673.4 407.9 L675.8 408.2 L678.1 407.8 L680.5 407.7 L682.8 407.6 L685.2 408.2 L687.5 408.1 L689.9 408.1 L692.2 408.3 L694.6 408.6 L697.0 408.2 L699.3 408.2 L701.7 408.5 L704.0 408.3 L706.4 408.3 L708.7 408.2 L711.1 408.2 L713.5 408.1 L715.8 408.0 L718.2 408.2 L720.5 408.3 L722.9 407.9 L725.2 408.1 L727.6 408.7 L729.9 408.5 L732.3 408.6 L734.7 408.3 L737.0 408.5 L739.4 408.1 L741.7 408.3 L744.1 408.3 L746.4 407.8 L748.8 408.2 L751.1 408.2 L753.5 408.2 L755.9 408.4 L758.2 408.3 L760.6 408.7 L762.9 408.7 L765.3 408.7 L767.6 408.4 L770.0 408.3 L772.4 408.2 L774.7 408.3 L777.1 408.1 L779.4 408.0 L781.8 408.2 L784.1 408.2 L786.5 408.5 L788.8 408.5 L791.2 408.6 L793.6 408.5 L795.9 409.0 L798.3 409.0 L800.6 408.5 L803.0 408.6 L805.3 408.6 L807.7 408.5 L810.0 408.3 L812.4 408.1 L814.8 408.2 L817.1 408.2 L819.5 408.1 L821.8 408.7 L824.2 408.4 L826.5 408.8 L828.9 408.7 L831.3 408.9 L833.6 408.8 L836.0 408.6 L838.3 409.0 L840.7 408.9 L843.0 408.5 L845.4 408.5 L847.7 408.5 L850.1 408.4 L852.5 408.4 L854.8 408.7 L857.2 408.5 L859.5 408.7 L861.9 409.1 L864.2 408.8 L866.6 409.3 L868.9 409.2 L871.3 408.6 L873.7 408.6 L876.0 408.5 L878.4 408.5 L880.7 408.6 L883.1 408.5 L885.4 408.8 L887.8 408.9 L890.2 409.0 L892.5 409.0 L894.9 409.2 L897.2 409.0 L899.6 409.1 L901.9 409.1 L904.3 409.1 L906.6 408.8 L909.0 408.9 L911.4 409.0 L913.7 408.6 L916.1 408.6 L918.4 408.5 L920.8 408.8 L923.1 408.9 L925.5 408.9 L927.8 409.2 L930.2 409.2 L932.6 409.5 L934.9 409.0 L937.3 408.9 L939.6 409.1 L942.0 409.0 L944.3 408.8 L946.7 408.6 L949.1 408.9 L951.4 408.8 L953.8 408.9 L956.1 408.9 L958.5 409.4 L960.8 409.3 L963.2 409.7 L965.5 409.3 L967.9 409.7 L970.3 409.2 L972.6 409.1 L975.0 409.2 L977.3 408.8 L979.7 409.1 L982.0 408.7 L984.4 409.3 L986.8 409.1 L989.1 409.5 L991.5 409.4 L993.8 409.4 L996.2 409.9 L998.5 409.4 L1000.9 409.7 L1003.2 409.4 L1005.6 409.5 L1008.0 409.0 L1010.3 409.4 L1012.7 409.3 L1015.0 409.3 L1017.4 409.4 L1019.7 409.1 L1022.1 409.2 L1024.4 409.2 L1026.8 409.5 L1029.2 409.9 L1031.5 410.0 L1033.9 409.8 L1036.2 409.5 L1038.6 409.7 L1040.9 409.3 L1043.3 409.5 L1045.7 409.3 L1048.0 409.2 L1050.4 409.0 L1052.7 409.2 L1055.1 409.6 L1057.4 409.6 L1059.8 409.6 L1062.1 409.9 L1064.5 409.8 L1066.9 409.6 L1069.2 409.8 L1071.6 409.4 L1073.9 409.8 L1076.3 409.5 L1078.6 409.6 L1081.0 409.5 L1083.3 409.0 L1085.7 409.5 L1088.1 409.8 L1090.4 409.5 L1092.8 409.6 L1095.1 410.2 L1097.5 409.9 L1099.8 409.9 L1102.2 407.8 L1104.5 407.6 L1106.9 407.6 L1109.3 409.2 L1111.6 409.4 L1114.0 409.4 L1116.3 409.5 L1118.7 409.3 L1121.0 409.5 L1123.4 410.0 L1125.8 409.9 L1128.1 409.8 L1130.5 410.1 L1132.8 409.9 L1135.2 410.2 L1137.5 409.9 L1139.9 409.4 L1142.2 409.7 L1144.6 409.5 L1147.0 409.4 L1149.3 409.7 L1151.7 409.8 L1154.0 409.5 L1156.4 410.0 L1158.7 409.8 L1161.1 410.0 L1163.5 410.3 L1165.8 409.9 L1168.2 410.3 L1170.5 410.1 L1172.9 409.9 L1175.2 409.9 L1177.6 409.4 L1179.9 409.8 L1182.3 409.5 L1184.7 409.8 L1187.0 409.7 L1189.4 410.1 L1191.7 410.2 L1194.1 410.0 L1196.4 410.2 L1198.8 410.5 L1201.1 410.2 L1203.5 410.0 L1205.9 410.2 L1208.2 410.1 L1210.6 409.8 L1212.9 409.8 L1215.3 409.6 L1217.6 409.8 L1220.0 409.7 L1222.3 409.7 L1224.7 410.3 L1227.1 410.0 L1229.4 410.3 L1231.8 410.3 L1234.1 410.0 L1236.5 410.2 L1238.8 410.3 L1241.2 410.0 L1243.6 410.0 L1245.9 410.1 L1248.3 409.9 L1250.6 409.6 L1253.0 410.1 L1255.3 409.9 L1257.7 410.0 L1260.0 410.4 L1262.4 410.6 L1264.8 410.2 L1267.1 410.2 L1269.5 410.5 L1271.8 410.3 L1274.2 410.9 L1276.5 410.7 L1278.9 411.0 L1281.2 411.5 L1283.6 411.9 L1286.0 412.4 L1288.3 412.9 L1290.7 413.8 L1293.0 414.5 L1295.4 415.4 L1295.4 418.8 L1293.0 420.0 L1290.7 420.7 L1288.3 421.5 L1286.0 421.9 L1283.6 422.3 L1281.2 422.9 L1278.9 423.3 L1276.5 423.5 L1274.2 424.0 L1271.8 424.1 L1269.5 424.7 L1267.1 424.6 L1264.8 424.5 L1262.4 424.6 L1260.0 424.4 L1257.7 424.4 L1255.3 424.6 L1253.0 424.3 L1250.6 424.6 L1248.3 424.7 L1245.9 424.7 L1243.6 424.5 L1241.2 424.4 L1238.8 424.6 L1236.5 424.3 L1234.1 424.6 L1231.8 424.5 L1229.4 424.3 L1227.1 424.7 L1224.7 424.7 L1222.3 424.2 L1220.0 424.2 L1217.6 424.5 L1215.3 424.3 L1212.9 424.5 L1210.6 424.8 L1208.2 424.6 L1205.9 424.5 L1203.5 424.4 L1201.1 424.5 L1198.8 424.4 L1196.4 424.4 L1194.1 424.8 L1191.7 424.5 L1189.4 424.5 L1187.0 424.3 L1184.7 424.6 L1182.3 424.7 L1179.9 424.8 L1177.6 424.5 L1175.2 424.6 L1172.9 424.4 L1170.5 424.5 L1168.2 424.7 L1165.8 424.9 L1163.5 424.4 L1161.1 424.8 L1158.7 424.4 L1156.4 424.9 L1154.0 424.4 L1151.7 424.7 L1149.3 424.7 L1147.0 424.9 L1144.6 424.8 L1142.2 424.8 L1139.9 424.8 L1137.5 424.4 L1135.2 424.5 L1132.8 424.5 L1130.5 424.4 L1128.1 424.5 L1125.8 424.5 L1123.4 424.6 L1121.0 425.0 L1118.7 424.6 L1116.3 424.7 L1114.0 424.6 L1111.6 425.0 L1109.3 424.6 L1106.9 428.6 L1104.5 428.4 L1102.2 428.2 L1099.8 425.0 L1097.5 424.8 L1095.1 424.9 L1092.8 424.9 L1090.4 425.1 L1088.1 424.9 L1085.7 424.5 L1083.3 424.8 L1081.0 424.8 L1078.6 424.9 L1076.3 424.7 L1073.9 424.9 L1071.6 424.8 L1069.2 424.9 L1066.9 424.8 L1064.5 424.7 L1062.1 425.0 L1059.8 424.6 L1057.4 424.9 L1055.1 425.1 L1052.7 424.7 L1050.4 425.1 L1048.0 424.6 L1045.7 424.8 L1043.3 424.8 L1040.9 425.0 L1038.6 425.0 L1036.2 424.8 L1033.9 424.9 L1031.5 425.1 L1029.2 425.2 L1026.8 424.7 L1024.4 424.7 L1022.1 424.8 L1019.7 424.8 L1017.4 424.8 L1015.0 424.9 L1012.7 425.2 L1010.3 425.1 L1008.0 425.0 L1005.6 424.9 L1003.2 424.7 L1000.9 424.8 L998.5 424.7 L996.2 425.0 L993.8 424.9 L991.5 424.9 L989.1 425.2 L986.8 425.0 L984.4 425.2 L982.0 425.2 L979.7 425.0 L977.3 425.1 L975.0 425.0 L972.6 425.1 L970.3 424.8 L967.9 425.0 L965.5 425.2 L963.2 425.0 L960.8 424.8 L958.5 425.2 L956.1 425.2 L953.8 425.2 L951.4 425.1 L949.1 425.3 L946.7 425.0 L944.3 424.9 L942.0 425.3 L939.6 425.4 L937.3 425.1 L934.9 425.3 L932.6 425.1 L930.2 425.1 L927.8 424.9 L925.5 424.9 L923.1 425.1 L920.8 425.4 L918.4 425.3 L916.1 425.3 L913.7 425.0 L911.4 425.3 L909.0 425.4 L906.6 425.2 L904.3 425.1 L901.9 425.0 L899.6 425.1 L897.2 425.0 L894.9 424.9 L892.5 425.1 L890.2 425.3 L887.8 425.5 L885.4 425.3 L883.1 425.2 L880.7 425.5 L878.4 425.1 L876.0 425.0 L873.7 425.4 L871.3 425.4 L868.9 425.1 L866.6 425.5 L864.2 425.3 L861.9 425.5 L859.5 425.2 L857.2 425.1 L854.8 425.4 L852.5 425.5 L850.1 425.4 L847.7 425.5 L845.4 425.5 L843.0 425.1 L840.7 425.3 L838.3 425.1 L836.0 425.4 L833.6 425.6 L831.3 425.1 L828.9 425.1 L826.5 425.4 L824.2 425.4 L821.8 425.5 L819.5 425.2 L817.1 425.4 L814.8 425.6 L812.4 425.6 L810.0 425.2 L807.7 425.7 L805.3 425.5 L803.0 425.6 L800.6 425.2 L798.3 425.5 L795.9 425.7 L793.6 425.4 L791.2 425.7 L788.8 425.3 L786.5 425.6 L784.1 425.7 L781.8 425.3 L779.4 425.3 L777.1 425.2 L774.7 425.3 L772.4 425.4 L770.0 425.4 L767.6 425.5 L765.3 425.6 L762.9 425.7 L760.6 425.6 L758.2 425.8 L755.9 425.8 L753.5 425.5 L751.1 425.8 L748.8 425.8 L746.4 425.7 L744.1 425.4 L741.7 425.7 L739.4 425.7 L737.0 425.6 L734.7 425.4 L732.3 425.5 L729.9 425.6 L727.6 425.6 L725.2 425.8 L722.9 425.6 L720.5 425.6 L718.2 425.8 L715.8 425.7 L713.5 425.7 L711.1 425.4 L708.7 426.0 L706.4 425.8 L704.0 426.0 L701.7 426.0 L699.3 426.0 L697.0 425.8 L694.6 426.0 L692.2 425.9 L689.9 425.5 L687.5 426.1 L685.2 425.6 L682.8 426.1 L680.5 425.9 L678.1 425.6 L675.8 426.0 L673.4 425.7 L671.0 426.0 L668.7 426.0 L666.3 425.6 L664.0 426.1 L661.6 426.2 L659.3 426.1 L656.9 425.8 L654.6 425.8 L652.2 425.7 L649.8 425.8 L647.5 425.7 L645.1 425.7 L642.8 426.0 L640.4 426.1 L638.1 426.1 L635.7 426.2 L633.4 426.1 L631.0 426.2 L628.6 426.3 L626.3 426.1 L623.9 425.8 L621.6 426.4 L619.2 426.1 L616.9 426.4 L614.5 426.4 L612.1 426.2 L609.8 426.1 L607.4 426.1 L605.1 426.2 L602.7 426.1 L600.4 426.4 L598.0 426.3 L595.7 426.3 L593.3 426.3 L590.9 426.4 L588.6 426.1 L586.2 426.4 L583.9 426.1 L581.5 426.4 L579.2 426.1 L576.8 426.1 L574.5 426.3 L572.1 426.4 L569.7 426.5 L567.4 426.2 L565.0 426.2 L562.7 426.5 L560.3 426.4 L558.0 426.6 L555.6 426.2 L553.2 426.4 L550.9 426.3 L548.5 426.2 L546.2 426.4 L543.8 426.3 L541.5 426.5 L539.1 426.5 L536.8 426.6 L534.4 426.7 L532.0 426.4 L529.7 426.8 L527.3 426.6 L525.0 426.8 L522.6 426.8 L520.3 426.5 L517.9 426.4 L515.5 426.8 L513.2 426.4 L510.8 426.8 L508.5 426.9 L506.1 426.4 L503.8 426.6 L501.4 426.6 L499.1 426.5 L496.7 427.0 L494.3 426.7 L492.0 426.9 L489.6 426.8 L487.3 427.0 L484.9 426.7 L482.6 426.9 L480.2 426.7 L477.9 426.7 L475.5 427.1 L473.1 427.0 L470.8 426.7 L468.4 426.8 L466.1 426.9 L463.7 426.8 L461.4 426.9 L459.0 426.7 L456.6 427.1 L454.3 427.0 L451.9 427.1 L449.6 427.1 L447.2 427.2 L444.9 427.2 L442.5 427.4 L440.2 427.1 L437.8 427.2 L435.4 427.4 L433.1 427.5 L430.7 427.4 L428.4 427.1 L426.0 427.3 L423.7 427.2 L421.3 427.5 L419.0 427.3 L416.6 427.5 L414.2 427.5 L411.9 427.6 L409.5 427.5 L407.2 427.7 L404.8 427.3 L402.5 427.7 L400.1 427.8 L397.8 427.7 L395.4 427.5 L393.0 428.1 L390.7 427.9 L388.3 428.4 L386.0 428.3 L383.6 428.0 L381.3 428.4 L378.9 428.7 L376.5 428.6 L374.2 428.8 L371.8 428.6 L369.5 429.1 L367.1 429.3 L364.8 429.5 L362.4 429.1 L360.1 429.5 L357.7 429.6 L355.3 429.4 L353.0 429.7 L350.6 429.9 L348.3 429.9 L345.9 429.6 L343.6 429.4 L341.2 429.1 L338.9 429.0 L336.5 428.8 L334.1 429.0 L331.8 429.4 L329.4 429.2 L327.1 429.3 L324.7 429.7 L322.4 429.7 L320.0 430.1 L317.6 430.0 L315.3 430.2 L312.9 430.1 L310.6 430.3 L308.2 430.2 L305.9 430.4 L303.5 430.4 L301.2 430.4 L298.8 430.6 L296.4 430.6 L294.1 430.7 L291.7 430.8 L289.4 431.0 L287.0 431.0 L284.7 430.9 L282.3 431.1 L279.9 431.3 L277.6 431.1 L275.2 431.1 L272.9 431.2 L270.5 431.1 L268.2 431.1 L265.8 431.4 L263.5 431.4 L261.1 431.2 L258.7 431.0 L256.4 431.5 L254.0 431.4 L251.7 431.2 L249.3 431.3 L247.0 431.1 L244.6 431.3 L242.3 431.1 L239.9 431.3 L237.5 431.1 L235.2 431.1 L232.8 431.5 L230.5 431.3 L228.1 431.1 L225.8 431.4 L223.4 431.1 L221.1 431.5 L218.7 431.4 L216.3 431.8 L214.0 431.4 L211.6 432.0 L209.3 432.1 L206.9 432.1 L204.6 431.9 L202.2 432.0 L199.8 432.4 L197.5 432.2 L195.1 432.4 L192.8 432.6 L190.4 432.7 L188.1 433.1 L185.7 432.9 L183.4 433.2 L181.0 433.2 L178.6 433.9 L176.3 433.7 L173.9 433.7 L171.6 433.8 L169.2 434.5 L166.9 434.6 L164.5 434.5 L162.2 434.7 L159.8 434.8 L157.4 434.6 L155.1 434.7 L152.7 435.1 L150.4 435.1 L148.0 435.1 L145.7 434.7 L143.3 434.8 L140.9 435.0 L138.6 434.9 L136.2 435.0 L133.9 435.4 L131.5 435.1 L129.2 435.6 L126.8 435.7 L124.5 435.7 L122.1 435.3 L119.7 435.8 L117.4 435.6 L115.0 435.9 L112.7 436.0 L110.3 435.7 L108.0 435.9 L105.6 435.7 L103.2 435.7 L100.9 435.9Z" fill="#808080" fill-opacity="0.5" stroke="none"/>
<rect x="123.9" y="347.5" width="11.6" height="85.5" fill="#fff"/>
<rect x="123.9" y="347.5" width="11.6" height="85.5" fill="#000" fill-opacity="0.35" stroke="#444" stroke-width="1.1"/>
<path d="M123.9 348.3l11.6 -10.2M123.9 372.5l11.6 -10.2M123.9 396.7l11.6 -10.2M123.9 420.9l11.6 -10.2M123.9 445.1l11.6 -10.2" stroke="#000" stroke-width="0.9"/>
<rect x="1255.4" y="347.5" width="6.2" height="85.5" fill="#fff"/>
<rect x="1255.4" y="347.5" width="6.2" height="85.5" fill="#000" fill-opacity="0.35" stroke="#444" stroke-width="1.1"/>
<path d="M1255.4 361.3l6.2 -5M1255.4 384.8l6.2 -5M1255.4 408.3l6.2 -5M1255.4 431.8l6.2 -5" stroke="#000" stroke-width="0.9"/>
<path d="M101.8 417.0H1299.4" stroke="#707070" stroke-width="1.5" fill="none"/>
<path d="M100.9 407.6 L102.1 407.8 L103.2 407.0 L104.4 399.4 L105.6 389.8 L106.8 402.8 L108.0 394.4 L109.1 409.6 L110.3 418.3 L111.5 395.7 L112.7 410.5 L113.9 416.3 L115.0 395.2 L116.2 396.4 L117.4 385.9 L118.6 421.4 L119.7 393.5 L120.9 397.9 L122.1 388.3 L123.3 405.2 L124.5 409.6 L125.6 419.9 L126.8 401.3 L128.0 389.8 L129.2 395.9 L130.3 429.5 L131.5 400.9 L132.7 406.7 L133.9 399.2 L135.1 424.4 L136.2 397.5 L137.4 392.7 L138.6 400.5 L139.8 407.5 L140.9 425.8 L142.1 407.4 L143.3 405.4 L144.5 396.4 L145.7 390.5 L146.8 405.8 L148.0 405.0 L149.2 411.3 L150.4 411.8 L151.5 407.4 L152.7 405.2 L153.9 412.9 L155.1 419.7 L156.3 401.6 L157.4 404.6 L158.6 407.7 L159.8 402.7 L161.0 386.9 L162.2 414.1 L163.3 403.4 L164.5 402.4 L165.7 407.1 L166.9 417.0 L168.0 402.6 L169.2 407.2 L170.4 394.9 L171.6 401.4 L172.8 410.2 L173.9 403.7 L175.1 400.5 L176.3 400.8 L177.5 408.8 L178.6 398.6 L179.8 394.6 L181.0 396.6 L182.2 396.2 L183.4 393.2 L184.5 396.7 L185.7 403.8 L186.9 407.1 L188.1 397.0 L189.2 395.2 L190.4 400.1 L191.6 401.3 L192.8 404.8 L194.0 418.1 L195.1 412.9 L196.3 419.0 L197.5 405.9 L198.7 393.3 L199.8 391.3 L201.0 402.5 L202.2 402.8 L203.4 408.6 L204.6 416.9 L205.7 404.5 L206.9 402.9 L208.1 389.8 L209.3 410.2 L210.4 406.4 L211.6 401.4 L212.8 419.2 L214.0 392.8 L215.2 383.2 L216.3 394.9 L217.5 407.0 L218.7 406.9 L219.9 406.4 L221.1 395.5 L222.2 400.0 L223.4 410.6 L224.6 404.0 L225.8 400.0 L226.9 410.3 L228.1 406.8 L229.3 400.8 L230.5 389.9 L231.7 398.0 L232.8 407.1 L234.0 404.7 L235.2 395.0 L236.4 398.8 L237.5 394.7 L238.7 409.5 L239.9 409.0 L241.1 407.5 L242.3 387.6 L243.4 405.6 L244.6 401.9 L245.8 409.7 L247.0 411.4 L248.1 396.2 L249.3 394.3 L250.5 404.8 L251.7 408.8 L252.9 416.7 L254.0 419.2 L255.2 411.1 L256.4 405.8 L257.6 394.2 L258.7 407.3 L259.9 408.6 L261.1 414.0 L262.3 419.3 L263.5 414.0 L264.6 407.4 L265.8 412.3 L267.0 408.7 L268.2 401.4 L269.3 406.2 L270.5 409.1 L271.7 397.8 L272.9 397.9 L274.1 397.8 L275.2 418.5 L276.4 399.0 L277.6 411.9 L278.8 417.4 L279.9 410.5 L281.1 394.2 L282.3 404.3 L283.5 405.5 L284.7 399.0 L285.8 396.5 L287.0 407.8 L288.2 413.8 L289.4 407.3 L290.6 398.6 L291.7 398.5 L292.9 406.3 L294.1 410.2 L295.3 404.1 L296.4 400.0 L297.6 403.8 L298.8 397.6 L300.0 399.8 L301.2 384.7 L302.3 404.4 L303.5 397.5 L304.7 403.9 L305.9 410.6 L307.0 402.9 L308.2 402.7 L309.4 398.4 L310.6 402.2 L311.8 406.7 L312.9 405.0 L314.1 407.8 L315.3 409.3 L316.5 403.8 L317.6 399.1 L318.8 402.1 L320.0 405.2 L321.2 406.0 L322.4 401.2 L323.5 399.6 L324.7 397.5 L325.9 396.3 L327.1 394.4 L328.2 408.6 L329.4 419.9 L330.6 399.4 L331.8 387.6 L333.0 412.6 L334.1 413.2 L335.3 404.3 L336.5 396.2 L337.7 398.7 L338.9 421.4 L340.0 403.7 L341.2 397.2 L342.4 403.3 L343.6 410.4 L344.7 411.7 L345.9 410.0 L347.1 400.2 L348.3 403.7 L349.5 408.0 L350.6 409.3 L351.8 407.6 L353.0 410.4 L354.2 410.5 L355.3 406.0 L356.5 404.1 L357.7 401.4 L358.9 400.0 L360.1 397.3 L361.2 401.4 L362.4 401.9 L363.6 403.4 L364.8 405.4 L365.9 399.8 L367.1 407.2 L368.3 410.6 L369.5 398.7 L370.7 399.0 L371.8 403.7 L373.0 397.9 L374.2 395.7 L375.4 400.3 L376.5 408.1 L377.7 406.4 L378.9 409.6 L380.1 409.4 L381.3 408.9 L382.4 408.0 L383.6 403.8 L384.8 405.6 L386.0 401.4 L387.1 402.6 L388.3 406.0 L389.5 402.5 L390.7 397.8 L391.9 396.9 L393.0 399.9 L394.2 394.1 L395.4 395.5 L396.6 398.5 L397.8 409.9 L398.9 409.1 L400.1 388.3 L401.3 402.2 L402.5 400.1 L403.6 399.8 L404.8 408.8 L406.0 401.4 L407.2 392.8 L408.4 397.4 L409.5 402.2 L410.7 402.1 L411.9 402.9 L413.1 399.3 L414.2 398.1 L415.4 403.7 L416.6 402.8 L417.8 402.3 L419.0 400.5 L420.1 402.6 L421.3 414.8 L422.5 389.8 L423.7 402.3 L424.8 411.2 L426.0 412.5 L427.2 414.8 L428.4 411.0 L429.6 409.1 L430.7 413.6 L431.9 415.6 L433.1 414.9 L434.3 414.4 L435.4 419.2 L436.6 412.5 L437.8 407.6 L439.0 408.6 L440.2 408.9 L441.3 405.5 L442.5 405.0 L443.7 406.5 L444.9 406.7 L446.0 403.8 L447.2 407.0 L448.4 410.1 L449.6 408.9 L450.8 412.9 L451.9 412.5 L453.1 407.7 L454.3 405.9 L455.5 404.1 L456.6 402.9 L457.8 403.3 L459.0 402.3 L460.2 401.6 L461.4 401.1 L462.5 398.3 L463.7 402.8 L464.9 415.2 L466.1 413.5 L467.3 403.2 L468.4 403.3 L469.6 405.6 L470.8 404.7 L472.0 399.6 L473.1 396.8 L474.3 403.5 L475.5 406.5 L476.7 407.5 L477.9 411.7 L479.0 411.9 L480.2 408.4 L481.4 405.3 L482.6 408.0 L483.7 416.2 L484.9 412.7 L486.1 402.3 L487.3 401.1 L488.5 403.4 L489.6 407.1 L490.8 405.1 L492.0 400.9 L493.2 408.4 L494.3 410.7 L495.5 404.9 L496.7 407.9 L497.9 412.5 L499.1 407.4 L500.2 402.3 L501.4 411.9 L502.6 411.3 L503.8 400.1 L504.9 403.5 L506.1 406.1 L507.3 403.9 L508.5 399.6 L509.7 402.4 L510.8 401.8 L512.0 411.1 L513.2 410.1 L514.4 406.7 L515.5 406.3 L516.7 402.3 L517.9 409.2 L519.1 412.1 L520.3 404.5 L521.4 410.7 L522.6 415.2 L523.8 411.3 L525.0 409.6 L526.2 399.4 L527.3 385.4 L528.5 363.3 L529.7 351.6 L530.9 369.2 L532.0 386.4 L533.2 400.5 L534.4 403.3 L535.6 404.7 L536.8 404.3 L537.9 402.9 L539.1 399.4 L540.3 400.5 L541.5 407.0 L542.6 405.5 L543.8 407.4 L545.0 405.8 L546.2 398.7 L547.4 396.9 L548.5 402.4 L549.7 404.5 L550.9 404.3 L552.1 402.9 L553.2 396.7 L554.4 398.3 L555.6 406.3 L556.8 405.4 L558.0 403.5 L559.1 400.3 L560.3 392.9 L561.5 393.8 L562.7 399.5 L563.8 399.4 L565.0 399.1 L566.2 399.0 L567.4 396.3 L568.6 397.8 L569.7 402.1 L570.9 407.5 L572.1 411.0 L573.3 410.1 L574.5 405.2 L575.6 400.8 L576.8 400.7 L578.0 401.4 L579.2 405.4 L580.3 408.1 L581.5 406.1 L582.7 408.8 L583.9 411.7 L585.1 405.5 L586.2 400.7 L587.4 406.0 L588.6 411.9 L589.8 413.2 L590.9 412.5 L592.1 411.2 L593.3 410.6 L594.5 408.4 L595.7 403.7 L596.8 403.7 L598.0 413.0 L599.2 413.8 L600.4 403.4 L601.5 402.1 L602.7 405.5 L603.9 406.1 L605.1 408.4 L606.3 406.6 L607.4 403.2 L608.6 403.9 L609.8 403.1 L611.0 401.4 L612.1 402.4 L613.3 402.6 L614.5 398.5 L615.7 393.8 L616.9 396.2 L618.0 401.0 L619.2 403.6 L620.4 409.3 L621.6 408.8 L622.7 400.7 L623.9 395.3 L625.1 397.8 L626.3 402.6 L627.5 400.9 L628.6 401.7 L629.8 402.8 L631.0 397.4 L632.2 396.5 L633.4 405.0 L634.5 410.3 L635.7 406.7 L636.9 400.4 L638.1 396.1 L639.2 398.1 L640.4 402.6 L641.6 404.5 L642.8 402.1 L644.0 401.6 L645.1 407.0 L646.3 408.7 L647.5 403.8 L648.7 398.6 L649.8 400.2 L651.0 402.4 L652.2 396.4 L653.4 391.0 L654.6 396.6 L655.7 405.0 L656.9 402.8 L658.1 401.3 L659.3 408.6 L660.4 410.5 L661.6 404.7 L662.8 402.2 L664.0 403.7 L665.2 403.2 L666.3 401.7 L667.5 403.4 L668.7 410.0 L669.9 416.4 L671.0 413.8 L672.2 403.8 L673.4 397.5 L674.6 401.7 L675.8 410.5 L676.9 412.2 L678.1 408.3 L679.3 409.7 L680.5 411.9 L681.6 409.4 L682.8 406.7 L684.0 403.8 L685.2 401.1 L686.4 401.0 L687.5 400.8 L688.7 400.7 L689.9 403.1 L691.1 405.3 L692.2 402.8 L693.4 400.0 L694.6 400.9 L695.8 398.3 L697.0 393.4 L698.1 398.9 L699.3 409.0 L700.5 406.5 L701.7 402.3 L702.9 406.7 L704.0 411.8 L705.2 413.2 L706.4 410.3 L707.6 409.7 L708.7 411.6 L709.9 409.5 L711.1 407.3 L712.3 407.4 L713.5 407.5 L714.6 404.9 L715.8 403.8 L717.0 406.4 L718.2 404.7 L719.3 399.2 L720.5 399.7 L721.7 402.9 L722.9 403.6 L724.1 405.8 L725.2 410.3 L726.4 413.3 L727.6 406.7 L728.8 400.3 L729.9 400.4 L731.1 400.9 L732.3 401.8 L733.5 401.5 L734.7 403.0 L735.8 401.4 L737.0 397.3 L738.2 403.2 L739.4 407.7 L740.5 402.8 L741.7 399.3 L742.9 400.1 L744.1 401.0 L745.3 399.0 L746.4 397.0 L747.6 400.9 L748.8 403.1 L750.0 398.9 L751.1 403.2 L752.3 408.5 L753.5 403.7 L754.7 401.4 L755.9 398.7 L757.0 396.5 L758.2 402.6 L759.4 408.1 L760.6 407.5 L761.8 403.3 L762.9 400.2 L764.1 400.8 L765.3 406.1 L766.5 410.4 L767.6 404.8 L768.8 400.6 L770.0 404.9 L771.2 408.6 L772.4 408.2 L773.5 407.9 L774.7 406.1 L775.9 400.7 L777.1 402.7 L778.2 408.7 L779.4 408.4 L780.6 417.0 L781.8 400.6 L783.0 403.9 L784.1 403.7 L785.3 400.8 L786.5 398.7 L787.7 397.7 L788.8 400.6 L790.0 401.7 L791.2 397.7 L792.4 402.5 L793.6 409.5 L794.7 407.6 L795.9 402.0 L797.1 395.5 L798.3 391.1 L799.4 395.8 L800.6 403.9 L801.8 406.0 L803.0 405.9 L804.2 405.7 L805.3 405.2 L806.5 402.8 L807.7 398.8 L808.9 398.0 L810.0 399.8 L811.2 403.6 L812.4 405.7 L813.6 403.3 L814.8 386.9 L815.9 394.0 L817.1 396.7 L818.3 405.9 L819.5 408.6 L820.7 406.1 L821.8 401.9 L823.0 399.0 L824.2 400.1 L825.4 401.5 L826.5 402.9 L827.7 401.4 L828.9 398.4 L830.1 396.7 L831.3 395.6 L832.4 398.3 L833.6 400.3 L834.8 399.1 L836.0 396.0 L837.1 395.7 L838.3 402.1 L839.5 406.7 L840.7 403.2 L841.9 396.9 L843.0 396.8 L844.2 399.1 L845.4 403.0 L846.6 406.3 L847.7 402.5 L848.9 399.9 L850.1 400.8 L851.3 401.5 L852.5 402.4 L853.6 403.5 L854.8 404.6 L856.0 402.8 L857.2 404.0 L858.3 406.8 L859.5 401.9 L860.7 400.4 L861.9 403.8 L863.1 401.7 L864.2 401.2 L865.4 400.6 L866.6 397.1 L867.8 399.0 L868.9 404.5 L870.1 403.2 L871.3 396.9 L872.5 397.5 L873.7 401.4 L874.8 399.3 L876.0 396.3 L877.2 397.1 L878.4 396.0 L879.6 395.1 L880.7 396.8 L881.9 397.3 L883.1 398.3 L884.3 405.0 L885.4 414.7 L886.6 413.8 L887.8 407.5 L889.0 406.2 L890.2 397.3 L891.3 394.2 L892.5 403.8 L893.7 404.0 L894.9 402.4 L896.0 408.7 L897.2 411.8 L898.4 404.8 L899.6 398.8 L900.8 401.7 L901.9 404.3 L903.1 404.0 L904.3 403.6 L905.5 399.7 L906.6 398.0 L907.8 406.7 L909.0 410.7 L910.2 405.8 L911.4 406.0 L912.5 409.7 L913.7 410.7 L914.9 408.6 L916.1 406.1 L917.2 405.1 L918.4 408.2 L919.6 410.0 L920.8 406.3 L922.0 408.0 L923.1 412.4 L924.3 408.6 L925.5 403.9 L926.7 405.3 L927.8 406.1 L929.0 405.4 L930.2 408.0 L931.4 408.1 L932.6 405.3 L933.7 406.2 L934.9 407.4 L936.1 405.3 L937.3 402.6 L938.5 400.2 L939.6 400.3 L940.8 403.3 L942.0 406.6 L943.2 407.8 L944.3 406.5 L945.5 404.4 L946.7 401.5 L947.9 399.9 L949.1 401.5 L950.2 403.3 L951.4 401.3 L952.6 396.5 L953.8 397.6 L954.9 408.2 L956.1 413.5 L957.3 409.4 L958.5 408.2 L959.7 405.8 L960.8 400.2 L962.0 398.9 L963.2 402.4 L964.4 405.6 L965.5 405.5 L966.7 405.8 L967.9 406.4 L969.1 403.4 L970.3 399.5 L971.4 399.3 L972.6 401.9 L973.8 402.7 L975.0 402.3 L976.1 404.7 L977.3 407.4 L978.5 406.6 L979.7 403.2 L980.9 399.9 L982.0 400.0 L983.2 402.9 L984.4 402.1 L985.6 399.2 L986.8 398.8 L987.9 400.4 L989.1 402.3 L990.3 403.6 L991.5 403.6 L992.6 406.2 L993.8 409.8 L995.0 411.7 L996.2 410.8 L997.4 403.6 L998.5 399.8 L999.7 402.3 L1000.9 402.6 L1002.1 402.4 L1003.2 401.0 L1004.4 398.8 L1005.6 400.5 L1006.8 402.1 L1008.0 399.2 L1009.1 399.1 L1010.3 404.4 L1011.5 406.8 L1012.7 407.7 L1013.8 408.6 L1015.0 405.6 L1016.2 403.5 L1017.4 406.5 L1018.6 408.1 L1019.7 406.8 L1020.9 407.8 L1022.1 404.8 L1023.3 400.2 L1024.4 403.5 L1025.6 404.0 L1026.8 399.4 L1028.0 398.4 L1029.2 401.5 L1030.3 406.4 L1031.5 405.3 L1032.7 401.2 L1033.9 400.2 L1035.0 398.5 L1036.2 396.8 L1037.4 397.0 L1038.6 397.0 L1039.8 399.6 L1040.9 403.4 L1042.1 401.0 L1043.3 399.6 L1044.5 402.6 L1045.7 401.3 L1046.8 397.7 L1048.0 400.2 L1049.2 402.4 L1050.4 400.7 L1051.5 404.4 L1052.7 392.0 L1053.9 397.8 L1055.1 400.5 L1056.3 398.6 L1057.4 396.7 L1058.6 395.6 L1059.8 396.7 L1061.0 403.1 L1062.1 407.5 L1063.3 409.2 L1064.5 411.8 L1065.7 411.0 L1066.9 408.7 L1068.0 409.0 L1069.2 393.5 L1070.4 405.5 L1071.6 407.7 L1072.7 410.9 L1073.9 409.6 L1075.1 406.2 L1076.3 407.8 L1077.5 408.7 L1078.6 405.4 L1079.8 400.0 L1081.0 394.5 L1082.2 394.3 L1083.3 398.0 L1084.5 400.1 L1085.7 401.6 L1086.9 404.2 L1088.1 407.9 L1089.2 408.9 L1090.4 405.8 L1091.6 404.0 L1092.8 399.9 L1093.9 394.8 L1095.1 395.7 L1096.3 397.2 L1097.5 399.8 L1098.7 404.7 L1099.8 408.4 L1101.0 409.6 L1102.2 414.1 L1103.4 402.2 L1104.5 399.5 L1105.7 400.5 L1106.9 404.8 L1108.1 406.8 L1109.3 404.0 L1110.4 404.9 L1111.6 408.4 L1112.8 407.9 L1114.0 407.9 L1115.2 406.7 L1116.3 405.5 L1117.5 406.9 L1118.7 405.9 L1119.9 405.2 L1121.0 404.9 L1122.2 401.3 L1123.4 398.9 L1124.6 401.8 L1125.8 405.6 L1126.9 405.6 L1128.1 404.0 L1129.3 401.9 L1130.5 401.2 L1131.6 403.3 L1132.8 402.3 L1134.0 400.8 L1135.2 401.5 L1136.4 401.2 L1137.5 404.0 L1138.7 407.3 L1139.9 405.0 L1141.1 403.1 L1142.2 401.0 L1143.4 398.2 L1144.6 403.4 L1145.8 408.2 L1147.0 406.0 L1148.1 403.0 L1149.3 397.8 L1150.5 394.1 L1151.7 397.3 L1152.8 401.3 L1154.0 405.3 L1155.2 408.0 L1156.4 406.8 L1157.6 405.3 L1158.7 404.6 L1159.9 404.6 L1161.1 406.7 L1162.3 408.8 L1163.5 405.9 L1164.6 403.5 L1165.8 404.1 L1167.0 399.8 L1168.2 398.2 L1169.3 401.9 L1170.5 400.4 L1171.7 403.1 L1172.9 408.5 L1174.1 403.5 L1175.2 401.0 L1176.4 401.8 L1177.6 401.6 L1178.8 403.9 L1179.9 401.5 L1181.1 401.9 L1182.3 405.7 L1183.5 406.7 L1184.7 406.8 L1185.8 402.8 L1187.0 398.7 L1188.2 396.5 L1189.4 398.1 L1190.5 402.5 L1191.7 403.8 L1192.9 408.8 L1194.1 411.6 L1195.3 403.0 L1196.4 398.0 L1197.6 398.2 L1198.8 397.8 L1200.0 403.6 L1201.1 409.5 L1202.3 407.9 L1203.5 404.5 L1204.7 403.6 L1205.9 407.7 L1207.0 412.8 L1208.2 410.9 L1209.4 404.1 L1210.6 401.3 L1211.7 405.8 L1212.9 409.3 L1214.1 405.6 L1215.3 399.6 L1216.5 399.9 L1217.6 403.7 L1218.8 401.0 L1220.0 397.4 L1221.2 400.9 L1222.3 404.9 L1223.5 404.4 L1224.7 405.3 L1225.9 403.4 L1227.1 399.1 L1228.2 400.6 L1229.4 401.0 L1230.6 397.5 L1231.8 397.3 L1233.0 402.3 L1234.1 406.3 L1235.3 407.0 L1236.5 392.7 L1237.7 406.7 L1238.8 408.0 L1240.0 411.2 L1241.2 412.2 L1242.4 411.1 L1243.6 406.8 L1244.7 402.3 L1245.9 402.2 L1247.1 405.5 L1248.3 408.3 L1249.4 409.1 L1250.6 408.6 L1251.8 407.7 L1253.0 409.6 L1254.2 406.4 L1255.3 399.6 L1256.5 402.0 L1257.7 406.8 L1258.9 407.7 L1260.0 408.5 L1261.2 408.3 L1262.4 407.3 L1263.6 406.2 L1264.8 402.2 L1265.9 400.8 L1267.1 405.2 L1268.3 408.0 L1269.5 407.2 L1270.6 405.2 L1271.8 403.7 L1273.0 405.1 L1274.2 406.5 L1275.4 403.5 L1276.5 398.0 L1277.7 395.3 L1278.9 396.2 L1280.1 400.2 L1281.2 401.3 L1282.4 394.7 L1283.6 393.1 L1284.8 400.4 L1286.0 402.1 L1287.1 397.5 L1288.3 396.7 L1289.5 395.6 L1290.7 394.4 L1291.9 399.7 L1293.0 404.4 L1294.2 403.1 L1295.4 400.8 L1296.6 398.4 L1297.7 396.1 L1298.9 398.2 L1300.1 401.3" stroke="#0000ff" stroke-width="1.15" fill="none" stroke-linejoin="round"/>
<path d="M529.6 348.5V432.0" stroke="#000" stroke-width="1" stroke-dasharray="2.2 1.6" fill="none"/>
</g>
<rect x="101.8" y="348.5" width="1197.6" height="83.5" fill="none" stroke="#333" stroke-width="1"/>
<text class="s" x="103.25" y="446.80" font-size="10.1" text-anchor="middle" fill="#000" textLength="24.30" lengthAdjust="spacingAndGlyphs">3500</text>
<text class="s" x="162.15" y="446.80" font-size="10.1" text-anchor="middle" fill="#000" textLength="24.30" lengthAdjust="spacingAndGlyphs">3600</text>
<text class="s" x="221.05" y="446.80" font-size="10.1" text-anchor="middle" fill="#000" textLength="24.30" lengthAdjust="spacingAndGlyphs">3700</text>
<text class="s" x="279.95" y="446.80" font-size="10.1" text-anchor="middle" fill="#000" textLength="24.30" lengthAdjust="spacingAndGlyphs">3800</text>
<text class="s" x="338.85" y="446.80" font-size="10.1" text-anchor="middle" fill="#000" textLength="24.30" lengthAdjust="spacingAndGlyphs">3900</text>
<text class="s" x="397.75" y="446.80" font-size="10.1" text-anchor="middle" fill="#000" textLength="24.30" lengthAdjust="spacingAndGlyphs">4000</text>
<text class="s" x="456.65" y="446.80" font-size="10.1" text-anchor="middle" fill="#000" textLength="24.30" lengthAdjust="spacingAndGlyphs">4100</text>
<text class="s" x="515.55" y="446.80" font-size="10.1" text-anchor="middle" fill="#000" textLength="24.30" lengthAdjust="spacingAndGlyphs">4200</text>
<text class="s" x="574.45" y="446.80" font-size="10.1" text-anchor="middle" fill="#000" textLength="24.30" lengthAdjust="spacingAndGlyphs">4300</text>
<text class="s" x="633.35" y="446.80" font-size="10.1" text-anchor="middle" fill="#000" textLength="24.30" lengthAdjust="spacingAndGlyphs">4400</text>
<text class="s" x="692.25" y="446.80" font-size="10.1" text-anchor="middle" fill="#000" textLength="24.30" lengthAdjust="spacingAndGlyphs">4500</text>
<text class="s" x="751.15" y="446.80" font-size="10.1" text-anchor="middle" fill="#000" textLength="24.30" lengthAdjust="spacingAndGlyphs">4600</text>
<text class="s" x="810.05" y="446.80" font-size="10.1" text-anchor="middle" fill="#000" textLength="24.30" lengthAdjust="spacingAndGlyphs">4700</text>
<text class="s" x="868.95" y="446.80" font-size="10.1" text-anchor="middle" fill="#000" textLength="24.30" lengthAdjust="spacingAndGlyphs">4800</text>
<text class="s" x="927.85" y="446.80" font-size="10.1" text-anchor="middle" fill="#000" textLength="24.30" lengthAdjust="spacingAndGlyphs">4900</text>
<text class="s" x="986.75" y="446.80" font-size="10.1" text-anchor="middle" fill="#000" textLength="24.30" lengthAdjust="spacingAndGlyphs">5000</text>
<text class="s" x="1045.65" y="446.80" font-size="10.1" text-anchor="middle" fill="#000" textLength="24.30" lengthAdjust="spacingAndGlyphs">5100</text>
<text class="s" x="1104.55" y="446.80" font-size="10.1" text-anchor="middle" fill="#000" textLength="24.30" lengthAdjust="spacingAndGlyphs">5200</text>
<text class="s" x="1163.45" y="446.80" font-size="10.1" text-anchor="middle" fill="#000" textLength="24.30" lengthAdjust="spacingAndGlyphs">5300</text>
<text class="s" x="1222.35" y="446.80" font-size="10.1" text-anchor="middle" fill="#000" textLength="24.30" lengthAdjust="spacingAndGlyphs">5400</text>
<text class="s" x="1281.25" y="446.80" font-size="10.1" text-anchor="middle" fill="#000" textLength="24.30" lengthAdjust="spacingAndGlyphs">5500</text>
<text class="s" x="95.30" y="420.60" font-size="10.1" text-anchor="end" fill="#000" textLength="5.90" lengthAdjust="spacingAndGlyphs">0</text>
<text class="s" x="95.30" y="383.85" font-size="10.1" text-anchor="end" fill="#000" textLength="5.90" lengthAdjust="spacingAndGlyphs">5</text>
<path d="M103.25 432.0v3.6M162.15 432.0v3.6M221.05 432.0v3.6M279.95 432.0v3.6M338.85 432.0v3.6M397.75 432.0v3.6M456.65 432.0v3.6M515.55 432.0v3.6M574.45 432.0v3.6M633.35 432.0v3.6M692.25 432.0v3.6M751.15 432.0v3.6M810.05 432.0v3.6M868.95 432.0v3.6M927.85 432.0v3.6M986.75 432.0v3.6M1045.65 432.0v3.6M1104.55 432.0v3.6M1163.45 432.0v3.6M1222.35 432.0v3.6M1281.25 432.0v3.6M101.8 417.00h-3.6M101.8 380.25h-3.6" stroke="#333" stroke-width="0.9" fill="none"/>
<text class="s" x="103.6" y="346.4" font-size="10.8" fill="#000" letter-spacing="0.25">e<tspan dy="-3.8" font-size="7.4">−17</tspan><tspan dy="3.8">x2</tspan><tspan font-style="italic">Å</tspan></text>
<rect x="480" y="450.2" width="17" height="6" fill="#ff0000"/>
<text class="s" x="503.50" y="456.30" font-size="8.3" text-anchor="start" fill="#000">Lyα</text>
<rect x="533.8" y="450.2" width="17" height="6" fill="#008000"/>
<text class="s" x="557.20" y="456.30" font-size="8.3" text-anchor="start" fill="#000">OII</text>
<rect x="586.6" y="450.2" width="17" height="6" fill="#8a2be2"/>
<text class="s" x="610.00" y="456.30" font-size="8.3" text-anchor="start" fill="#000">CIV</text>
<rect x="641.8" y="450.2" width="17" height="6" fill="#800080"/>
<text class="s" x="665.20" y="456.30" font-size="8.3" text-anchor="start" fill="#000">CIII</text>
<rect x="693" y="450.2" width="17" height="6" fill="#ff00ff"/>
<text class="s" x="716.60" y="456.30" font-size="8.3" text-anchor="start" fill="#000">MgII</text>
<rect x="749" y="450.2" width="17" height="6" fill="#ffa500"/>
<text class="s" x="772.40" y="456.30" font-size="8.3" text-anchor="start" fill="#000">HeII</text>
<rect x="803.4" y="450.2" width="17" height="6" fill="#87ceeb"/>
<text class="s" x="826.80" y="456.30" font-size="8.3" text-anchor="start" fill="#000">(K)CaII</text>
<rect x="869" y="450.2" width="17" height="6" fill="#87ceeb"/>
<text class="s" x="892.40" y="456.30" font-size="8.3" text-anchor="start" fill="#000">(H)CaII</text>
<defs>
<filter id="nzh" x="0" y="0" width="100%" height="100%" color-interpolation-filters="sRGB">
<feTurbulence type="fractalNoise" baseFrequency="0.25" numOctaves="1" seed="41" result="t"/>
<feColorMatrix in="t" type="matrix" values="0.28 0 0 0 0.695  0.28 0 0 0 0.695  0.28 0 0 0 0.695  0 0 0 0 1"/>
</filter>
<filter id="nzh2" x="0" y="0" width="100%" height="100%" color-interpolation-filters="sRGB">
<feTurbulence type="fractalNoise" baseFrequency="0.25" numOctaves="1" seed="77" result="t"/>
<feColorMatrix in="t" type="matrix" values="0.28 0 0 0 0.705  0.28 0 0 0 0.705  0.28 0 0 0 0.705  0 0 0 0 1"/>
</filter>
<radialGradient id="gal1"><stop offset="0" stop-color="#000" stop-opacity="0.95"/><stop offset="0.22" stop-color="#000" stop-opacity="0.8"/><stop offset="0.45" stop-color="#000" stop-opacity="0.55"/><stop offset="0.68" stop-color="#000" stop-opacity="0.27"/><stop offset="0.85" stop-color="#000" stop-opacity="0.1"/><stop offset="1" stop-color="#000" stop-opacity="0"/></radialGradient>
<radialGradient id="gal3"><stop offset="0" stop-color="#000" stop-opacity="0.85"/><stop offset="0.2" stop-color="#000" stop-opacity="0.68"/><stop offset="0.45" stop-color="#000" stop-opacity="0.42"/><stop offset="0.7" stop-color="#000" stop-opacity="0.17"/><stop offset="0.88" stop-color="#000" stop-opacity="0.05"/><stop offset="1" stop-color="#000" stop-opacity="0"/></radialGradient>
<filter id="lfb" x="-10%" y="-10%" width="120%" height="120%"><feGaussianBlur stdDeviation="2.0"/></filter>
<clipPath id="c1"><rect x="70" y="532.7" width="148.6" height="147.5"/></clipPath>
<clipPath id="c2"><rect x="255" y="532.7" width="148.6" height="147.5"/></clipPath>
<clipPath id="c3"><rect x="440.2" y="532.9" width="148.1" height="147.5"/></clipPath>
</defs>
<text class="m ms" x="561.00" y="499.00" textLength="35.40" lengthAdjust="spacingAndGlyphs">0.162</text>
<text class="m fr" x="602.00" y="494.10" textLength="24.60" lengthAdjust="spacingAndGlyphs">0.175</text>
<text class="m fr" x="602.00" y="502.90" textLength="24.60" lengthAdjust="spacingAndGlyphs">0.151</text>
<text class="m" x="636.80" y="499.00" textLength="23.33" lengthAdjust="spacing">(r)</text>
<g clip-path="url(#c1)">
<rect x="70" y="532.7" width="148.6" height="147.5" filter="url(#nzh)"/>
<ellipse cx="131.6" cy="599.3" rx="50" ry="33" fill="url(#gal1)" transform="rotate(8 131.6 599.3)"/>
<ellipse cx="136.5" cy="599.8" rx="14" ry="9" fill="#000" opacity="0.55" filter="url(#bl3)"/>
<circle cx="147.1" cy="555.1" r="12.2" fill="none" stroke="#727272" stroke-width="1.15"/>
<circle cx="170.8" cy="558.4" r="12.2" fill="none" stroke="#727272" stroke-width="1.15"/>
<circle cx="108.3" cy="570.4" r="12.2" fill="none" stroke="#727272" stroke-width="1.15"/>
<circle cx="131.8" cy="572.6" r="12.2" fill="none" stroke="#727272" stroke-width="1.15"/>
<circle cx="155.4" cy="578.3" r="12.2" fill="none" stroke="#727272" stroke-width="1.15"/>
<circle cx="179.8" cy="581.0" r="12.2" fill="none" stroke="#727272" stroke-width="1.15"/>
<circle cx="92.3" cy="588.0" r="12.2" fill="none" stroke="#727272" stroke-width="1.15"/>
<circle cx="92.3" cy="588.0" r="13.1" fill="none" stroke="#6a6a6a" stroke-width="1.5" stroke-dasharray="1.7 1.6"/>
<circle cx="116.7" cy="594.1" r="12.2" fill="none" stroke="#727272" stroke-width="1.15"/>
<circle cx="187.7" cy="604.2" r="12.2" fill="none" stroke="#727272" stroke-width="1.15"/>
<circle cx="100.9" cy="611.0" r="12.2" fill="none" stroke="#727272" stroke-width="1.15"/>
<circle cx="100.9" cy="611.0" r="13.1" fill="none" stroke="#6a6a6a" stroke-width="1.5" stroke-dasharray="1.7 1.6"/>
<circle cx="173.0" cy="622.2" r="12.2" fill="none" stroke="#727272" stroke-width="1.15"/>
<circle cx="196.3" cy="626.1" r="12.2" fill="none" stroke="#727272" stroke-width="1.15"/>
<circle cx="109.9" cy="634.7" r="12.2" fill="none" stroke="#727272" stroke-width="1.15"/>
<circle cx="109.9" cy="634.7" r="13.1" fill="none" stroke="#6a6a6a" stroke-width="1.5" stroke-dasharray="1.7 1.6"/>
<circle cx="134.3" cy="638.0" r="12.2" fill="none" stroke="#727272" stroke-width="1.15"/>
<circle cx="157.2" cy="641.0" r="12.2" fill="none" stroke="#727272" stroke-width="1.15"/>
<circle cx="181.4" cy="645.9" r="12.2" fill="none" stroke="#727272" stroke-width="1.15"/>
<circle cx="117.8" cy="657.2" r="12.2" fill="none" stroke="#727272" stroke-width="1.15"/>
<circle cx="117.8" cy="657.2" r="13.1" fill="none" stroke="#6a6a6a" stroke-width="1.5" stroke-dasharray="1.7 1.6"/>
<circle cx="143.3" cy="661.7" r="12.2" fill="none" stroke="#727272" stroke-width="1.15"/>
<circle cx="143.3" cy="661.7" r="13.1" fill="none" stroke="#6a6a6a" stroke-width="1.5" stroke-dasharray="1.7 1.6"/>
</g>
<rect x="94.7" y="557.5" width="98.4" height="98.4" fill="none" stroke="#ff0000" stroke-width="1.1"/>
<circle cx="141.0" cy="595.9" r="12.3" fill="none" stroke="#0000ff" stroke-width="1.3"/>
<circle cx="164.0" cy="599.7" r="12.3" fill="none" stroke="#ff0000" stroke-width="1.3"/>
<circle cx="124.6" cy="614.4" r="12.3" fill="none" stroke="#ffa500" stroke-width="1.3"/>
<circle cx="124.6" cy="614.4" r="13.1" fill="none" stroke="#ffa500" stroke-width="1.2" stroke-dasharray="1.6 1.7"/>
<circle cx="149.4" cy="619.5" r="12.3" fill="none" stroke="#00ee00" stroke-width="1.3"/>
<path d="M141.4 606.7h5M143.9 604.2v5" stroke="#ff0000" stroke-width="1"/>
<g clip-path="url(#c2)">
<rect x="250" y="528" width="160" height="158" fill="#2f6b8e"/>
<g filter="url(#lfb)">
<polygon points="240.1,577.0 263.9,577.0 275.8,606.5 284.7,633.0 299.6,658.1 308.5,695.0 240.1,695.0" fill="#3e4989"/>
<polygon points="280.3,518.0 418.5,518.0 418.5,541.6 381.3,547.5 344.2,546.0 321.9,551.9 299.6,562.2 284.7,571.1 274.3,562.2" fill="#26828e"/>
<polygon points="336.7,518.0 388.7,518.0 382.8,537.1 359.0,540.1 341.2,537.1" fill="#2fb47c"/>
<polygon points="326.3,547.5 382.8,547.5 382.8,594.7 362.0,588.8 341.2,577.0 329.3,562.2" fill="#414487"/>
<polygon points="240.1,518.0 281.7,518.0 278.0,544.5 266.9,562.2 260.9,577.0 240.1,585.8" fill="#440154"/>
<polygon points="329.3,543.0 344.2,546.0 356.0,562.2 353.1,574.0 339.7,572.5 329.3,559.2" fill="#440154"/>
<polygon points="382.8,547.5 418.5,538.6 418.5,600.6 393.2,597.6 381.3,577.0" fill="#440154"/>
<polygon points="283.2,562.2 299.6,554.8 324.8,562.2 344.2,572.5 366.4,582.9 385.8,593.2 397.7,606.5 393.2,624.2 373.9,624.2 362.0,609.4 359.0,624.2 336.7,638.9 321.9,641.9 304.0,624.2 284.7,600.6 280.3,577.0" fill="#1f9e89"/>
<polygon points="329.3,641.9 366.4,621.2 396.2,613.8 403.6,624.2 382.8,638.9 362.0,662.5 347.1,695.0 299.6,695.0 317.4,668.4" fill="#287c8e"/>
<polygon points="373.9,621.2 396.2,609.4 399.1,621.2 382.8,633.0" fill="#1f9e89"/>
<polygon points="288.4,566.6 299.6,560.7 323.4,568.1 339.7,577.0 359.0,585.8 379.8,595.4 373.9,604.2 360.5,609.4 356.0,621.2 330.8,635.2 321.9,635.2 305.5,619.7 288.4,596.1 286.2,579.9" fill="#5ec962"/>
<polygon points="298.1,621.2 308.5,624.2 329.3,650.7 324.8,661.0 311.5,662.5 296.6,643.3 294.4,628.6" fill="#440154"/>
<polygon points="347.1,624.2 359.0,613.1 370.9,610.9 369.4,621.2 353.1,631.5" fill="#443a83"/>
<polygon points="357.5,614.6 366.4,613.8 366.4,620.5 359.0,621.2" fill="#440154"/>
<polygon points="418.5,624.2 388.7,636.0 367.9,661.0 350.1,695.0 385.8,695.0 388.7,665.5 418.5,656.6" fill="#440154"/>
<polygon points="388.7,665.5 418.5,659.6 418.5,695.0 385.8,695.0" fill="#26828e"/>
<polygon points="293.6,569.6 299.6,565.2 321.9,572.5 336.7,581.4 356.0,588.8 373.9,596.1 370.9,600.6 356.0,606.5 351.6,618.2 329.3,630.1 323.4,630.1 308.5,616.8 292.1,594.7 290.7,579.9" fill="#fde725"/>
</g></g>
<rect x="280.2" y="557.4" width="98.4" height="98.4" fill="none" stroke="#ff0000" stroke-width="1.1"/>
<path d="M292.5 606.6H322.0M337.6 606.6H367.1M329.4 570.5V598.4M329.4 614.0V644.3" stroke="#ff0000" stroke-width="1.1" fill="none"/>
<g clip-path="url(#c3)">
<rect x="440.2" y="532.9" width="148.1" height="147.5" filter="url(#nzh2)"/>
<ellipse cx="503.1" cy="601.1" rx="48" ry="33" fill="url(#gal3)" transform="rotate(8 503.1 601.1)"/>
<ellipse cx="503.1" cy="601.1" rx="9" ry="6" fill="#000" opacity="0.5" filter="url(#bl3)"/>
</g>
<rect x="465.4" y="557.3" width="98.4" height="98.4" fill="none" stroke="#ff0000" stroke-width="1.1"/>
<ellipse cx="502.8" cy="600.1" rx="56.8" ry="37.4" fill="none" stroke="#ffc926" stroke-width="1.2" transform="rotate(16.5 502.8 600.1)"/>
<path d="M478.2 606.5H495.7M522.2 606.5H551.7M514.6 569.9V599.5M514.6 614.1V643.8" stroke="#ff0000" stroke-width="1.1" fill="none"/>
<rect x="496.3" y="594.4" width="13.2" height="12.8" fill="none" stroke="#0000ff" stroke-width="1.3"/>
<rect x="70.0" y="532.7" width="148.6" height="147.5" fill="none" stroke="#000" stroke-width="1.1"/>
<text class="s" x="78.30" y="696.20" font-size="11.4" text-anchor="middle" fill="#000" textLength="14.90" lengthAdjust="spacingAndGlyphs">−4</text>
<text class="s" x="62.40" y="676.40" font-size="11.4" text-anchor="end" fill="#000" textLength="14.90" lengthAdjust="spacingAndGlyphs">−4</text>
<text class="s" x="111.10" y="696.20" font-size="11.4" text-anchor="middle" fill="#000" textLength="14.90" lengthAdjust="spacingAndGlyphs">−2</text>
<text class="s" x="62.40" y="643.60" font-size="11.4" text-anchor="end" fill="#000" textLength="14.90" lengthAdjust="spacingAndGlyphs">−2</text>
<text class="s" x="143.90" y="696.20" font-size="11.4" text-anchor="middle" fill="#000" textLength="6.60" lengthAdjust="spacingAndGlyphs">0</text>
<text class="s" x="62.40" y="610.80" font-size="11.4" text-anchor="end" fill="#000" textLength="6.60" lengthAdjust="spacingAndGlyphs">0</text>
<text class="s" x="176.70" y="696.20" font-size="11.4" text-anchor="middle" fill="#000" textLength="6.60" lengthAdjust="spacingAndGlyphs">2</text>
<text class="s" x="62.40" y="578.00" font-size="11.4" text-anchor="end" fill="#000" textLength="6.60" lengthAdjust="spacingAndGlyphs">2</text>
<text class="s" x="209.50" y="696.20" font-size="11.4" text-anchor="middle" fill="#000" textLength="6.60" lengthAdjust="spacingAndGlyphs">4</text>
<text class="s" x="62.40" y="545.20" font-size="11.4" text-anchor="end" fill="#000" textLength="6.60" lengthAdjust="spacingAndGlyphs">4</text>
<path d="M78.30 680.2v3.6M70.0 672.30h-3.6M111.10 680.2v3.6M70.0 639.50h-3.6M143.90 680.2v3.6M70.0 606.70h-3.6M176.70 680.2v3.6M70.0 573.90h-3.6M209.50 680.2v3.6M70.0 541.10h-3.6" stroke="#000" stroke-width="1" fill="none"/>
<text class="s" x="143.90" y="526.20" font-size="13.6" text-anchor="middle" fill="#000" textLength="93.00" lengthAdjust="spacingAndGlyphs">Fiber Positions</text>
<text class="s" x="143.90" y="546.20" font-size="11.6" text-anchor="middle" fill="#ff0000">N</text>
<text class="s" x="80.20" y="610.90" font-size="11.6" text-anchor="middle" fill="#ff0000">E</text>
<rect x="255.0" y="532.7" width="148.6" height="147.5" fill="none" stroke="#000" stroke-width="1.1"/>
<text class="s" x="263.80" y="696.20" font-size="11.4" text-anchor="middle" fill="#000" textLength="14.90" lengthAdjust="spacingAndGlyphs">−4</text>
<text class="s" x="247.40" y="676.30" font-size="11.4" text-anchor="end" fill="#000" textLength="14.90" lengthAdjust="spacingAndGlyphs">−4</text>
<text class="s" x="296.60" y="696.20" font-size="11.4" text-anchor="middle" fill="#000" textLength="14.90" lengthAdjust="spacingAndGlyphs">−2</text>
<text class="s" x="247.40" y="643.50" font-size="11.4" text-anchor="end" fill="#000" textLength="14.90" lengthAdjust="spacingAndGlyphs">−2</text>
<text class="s" x="329.40" y="696.20" font-size="11.4" text-anchor="middle" fill="#000" textLength="6.60" lengthAdjust="spacingAndGlyphs">0</text>
<text class="s" x="247.40" y="610.70" font-size="11.4" text-anchor="end" fill="#000" textLength="6.60" lengthAdjust="spacingAndGlyphs">0</text>
<text class="s" x="362.20" y="696.20" font-size="11.4" text-anchor="middle" fill="#000" textLength="6.60" lengthAdjust="spacingAndGlyphs">2</text>
<text class="s" x="247.40" y="577.90" font-size="11.4" text-anchor="end" fill="#000" textLength="6.60" lengthAdjust="spacingAndGlyphs">2</text>
<text class="s" x="395.00" y="696.20" font-size="11.4" text-anchor="middle" fill="#000" textLength="6.60" lengthAdjust="spacingAndGlyphs">4</text>
<text class="s" x="247.40" y="545.10" font-size="11.4" text-anchor="end" fill="#000" textLength="6.60" lengthAdjust="spacingAndGlyphs">4</text>
<path d="M263.80 680.2v3.6M255.0 672.20h-3.6M296.60 680.2v3.6M255.0 639.40h-3.6M329.40 680.2v3.6M255.0 606.60h-3.6M362.20 680.2v3.6M255.0 573.80h-3.6M395.00 680.2v3.6M255.0 541.00h-3.6" stroke="#000" stroke-width="1" fill="none"/>
<text class="s" x="329.40" y="526.20" font-size="13.6" text-anchor="middle" fill="#000" textLength="82.50" lengthAdjust="spacingAndGlyphs">Lineflux Map</text>
<text class="s" x="329.40" y="546.20" font-size="11.6" text-anchor="middle" fill="#ff0000">N</text>
<text class="s" x="265.20" y="610.80" font-size="11.6" text-anchor="middle" fill="#ff0000">E</text>
<rect x="440.2" y="532.9" width="148.1" height="147.5" fill="none" stroke="#000" stroke-width="1.1"/>
<text class="s" x="449.00" y="696.40" font-size="11.4" text-anchor="middle" fill="#000" textLength="14.90" lengthAdjust="spacingAndGlyphs">−4</text>
<text class="s" x="432.60" y="676.20" font-size="11.4" text-anchor="end" fill="#000" textLength="14.90" lengthAdjust="spacingAndGlyphs">−4</text>
<text class="s" x="481.80" y="696.40" font-size="11.4" text-anchor="middle" fill="#000" textLength="14.90" lengthAdjust="spacingAndGlyphs">−2</text>
<text class="s" x="432.60" y="643.40" font-size="11.4" text-anchor="end" fill="#000" textLength="14.90" lengthAdjust="spacingAndGlyphs">−2</text>
<text class="s" x="514.60" y="696.40" font-size="11.4" text-anchor="middle" fill="#000" textLength="6.60" lengthAdjust="spacingAndGlyphs">0</text>
<text class="s" x="432.60" y="610.60" font-size="11.4" text-anchor="end" fill="#000" textLength="6.60" lengthAdjust="spacingAndGlyphs">0</text>
<text class="s" x="547.40" y="696.40" font-size="11.4" text-anchor="middle" fill="#000" textLength="6.60" lengthAdjust="spacingAndGlyphs">2</text>
<text class="s" x="432.60" y="577.80" font-size="11.4" text-anchor="end" fill="#000" textLength="6.60" lengthAdjust="spacingAndGlyphs">2</text>
<text class="s" x="580.20" y="696.40" font-size="11.4" text-anchor="middle" fill="#000" textLength="6.60" lengthAdjust="spacingAndGlyphs">4</text>
<text class="s" x="432.60" y="545.00" font-size="11.4" text-anchor="end" fill="#000" textLength="6.60" lengthAdjust="spacingAndGlyphs">4</text>
<path d="M449.00 680.4v3.6M440.2 672.10h-3.6M481.80 680.4v3.6M440.2 639.30h-3.6M514.60 680.4v3.6M440.2 606.50h-3.6M547.40 680.4v3.6M440.2 573.70h-3.6M580.20 680.4v3.6M440.2 540.90h-3.6" stroke="#000" stroke-width="1" fill="none"/>
<text class="s" x="514.60" y="526.20" font-size="13.6" text-anchor="middle" fill="#000" textLength="76.00" lengthAdjust="spacingAndGlyphs">HSC(26.2) r</text>
<text class="s" x="514.60" y="546.20" font-size="11.6" text-anchor="middle" fill="#ff0000">N</text>
<text class="s" x="450.40" y="610.70" font-size="11.6" text-anchor="middle" fill="#ff0000">E</text>
<text class="s" x="143.90" y="706.80" font-size="11.6" text-anchor="middle" fill="#000" textLength="40.50" lengthAdjust="spacingAndGlyphs">arcsecs</text>
<text class="s" x="329.40" y="706.80" font-size="11.6" text-anchor="middle" fill="#000" textLength="101.00" lengthAdjust="spacingAndGlyphs">s/b: 6.04 +/- 0.089</text>
<text class="s" x="514.2" y="706.6" font-size="11.6" text-anchor="middle" fill="#1a1a1a" textLength="119" lengthAdjust="spacingAndGlyphs" style="white-space:pre">m:20.9  re:2.8"  s:0.8"</text>
<text class="s" x="515.80" y="718.80" font-size="11.6" text-anchor="middle" fill="#000" textLength="106.00" lengthAdjust="spacingAndGlyphs">EWr: 4, PLAE: 0.162</text>
</svg>
</body></html>
